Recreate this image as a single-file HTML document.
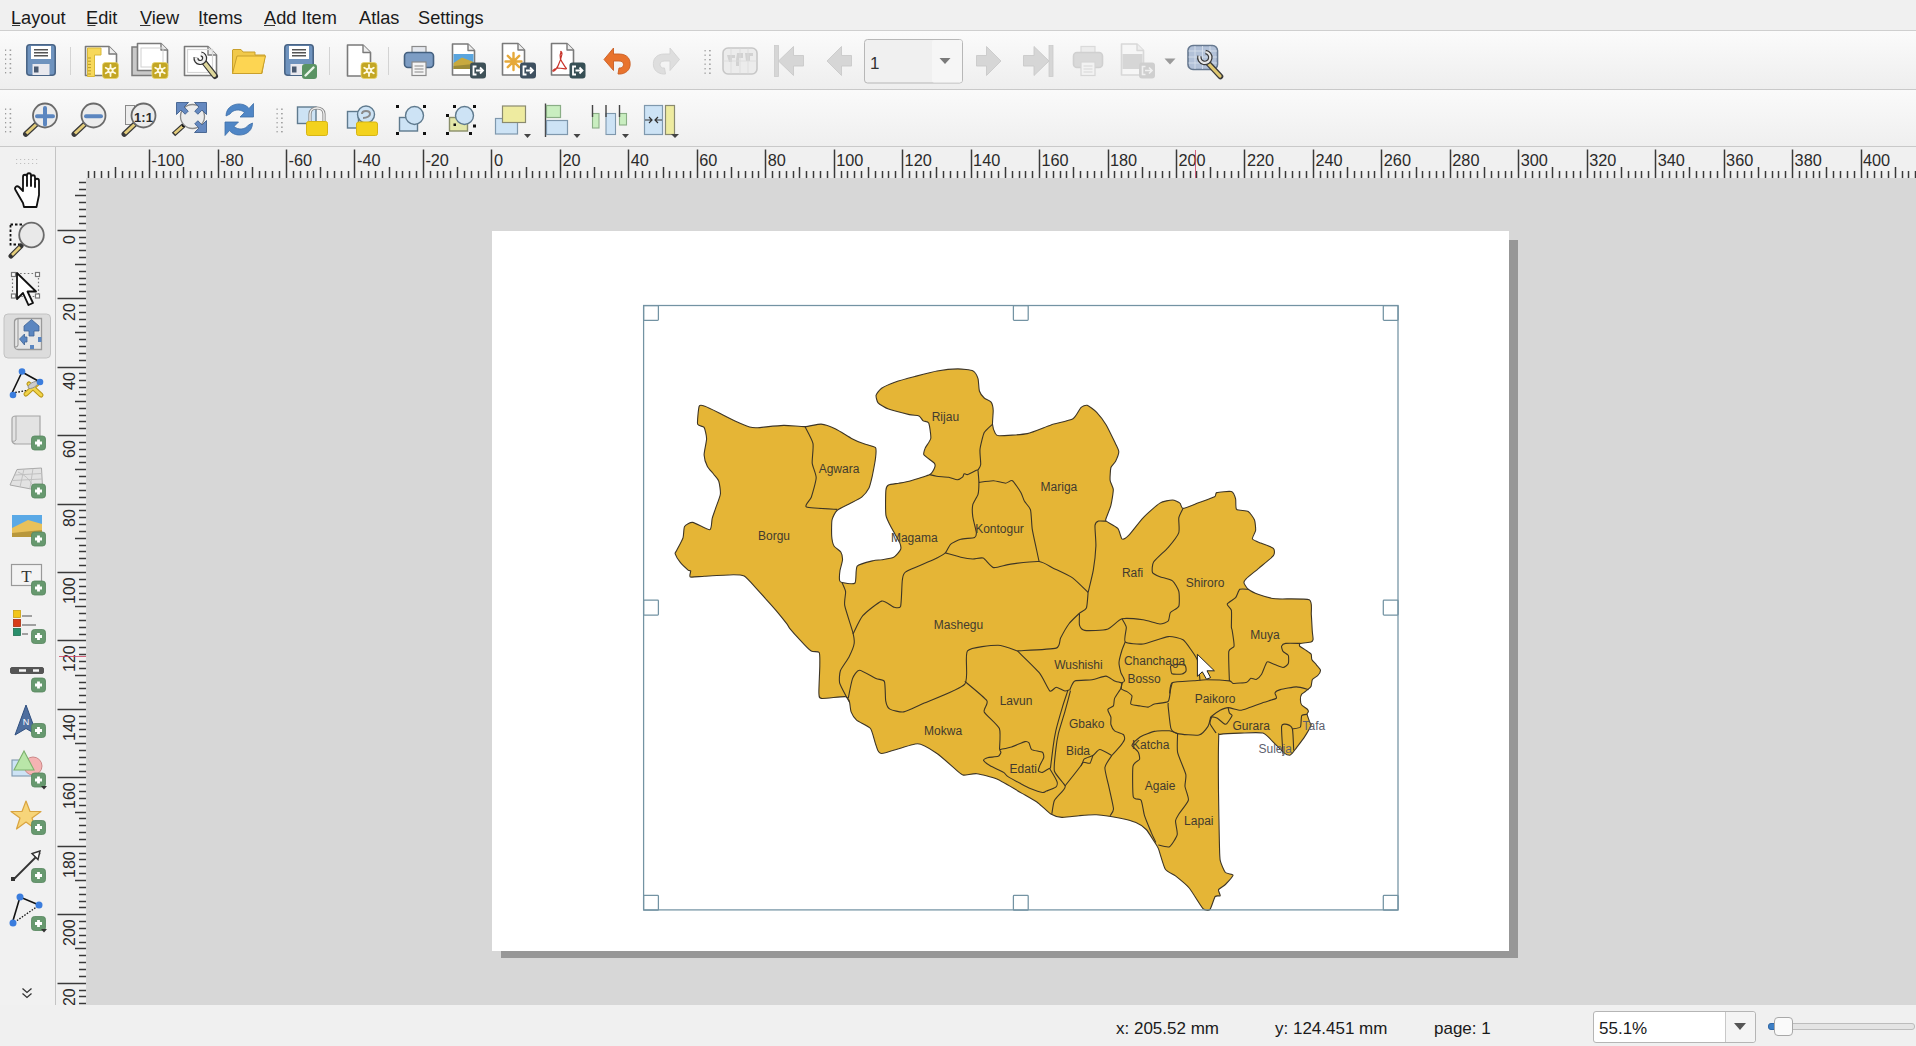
<!DOCTYPE html><html><head><meta charset="utf-8"><title>Layout</title><style>
*{margin:0;padding:0;box-sizing:border-box}
html,body{width:1916px;height:1046px;overflow:hidden;background:#f0f0f0;font-family:"Liberation Sans",sans-serif;color:#1b1b1b}
.a{position:absolute}
.mi{position:absolute;top:8px;font-size:18.2px;line-height:20px;color:#1a1a1a;white-space:nowrap}
.mi u{text-decoration:none;border-bottom:1px solid #1a1a1a}
.st{position:absolute;top:1019px;font-size:17px;line-height:20px;color:#1a1a1a;white-space:nowrap}
svg{position:absolute;overflow:visible}
</style></head><body>
<div class="a" style="left:0;top:0;width:1916px;height:31px;background:#f0f0f0;border-bottom:1px solid #cfcfcf"></div>
<div class="mi" style="left:11px">Layout</div>
<div class="mi" style="left:86px">Edit</div>
<div class="mi" style="left:140px">View</div>
<div class="mi" style="left:198px">Items</div>
<div class="mi" style="left:264px">Add Item</div>
<div class="mi" style="left:359px">Atlas</div>
<div class="mi" style="left:418px">Settings</div>
<svg style="left:0;top:0" width="600" height="40"><path d="M12 25.5H20M87.5 25.5H95.5M140 25.5H150.5M199.5 25.5H203.5M264 25.5H275" stroke="#333" stroke-width="1"/></svg>
<div class="a" style="left:0;top:31px;width:1916px;height:59px;background:linear-gradient(#fbfbfb,#eeeeee);border-bottom:1px solid #c9c9c9"></div>
<div class="a" style="left:0;top:90px;width:1916px;height:57px;background:linear-gradient(#fafafa,#efefef);border-bottom:1px solid #c9c9c9"></div>
<div class="a" style="left:0;top:147px;width:56px;height:858px;background:#f1f1f1;border-right:1px solid #c4c4c4"></div>
<div class="a" style="left:56px;top:147px;width:1860px;height:31px;background:#f0f0f0"></div>
<div class="a" style="left:56px;top:178px;width:30px;height:827px;background:#f0f0f0"></div>
<div class="a" style="left:86px;top:178px;width:1830px;height:827px;background:#d7d7d7"></div>
<div class="a" style="left:0;top:1005px;width:1916px;height:41px;background:#f0f0f0"></div>
<svg style="left:0;top:0" width="1916" height="1046"><path d="M88.5 171V178 M94.5 171V178 M101.5 171V178 M108.5 171V178 M115.5 167V178 M122.5 171V178 M129.5 171V178 M135.5 171V178 M142.5 171V178 M149.5 149.5V178 M156.5 171V178 M163.5 171V178 M170.5 171V178 M177.5 171V178 M183.5 167V178 M190.5 171V178 M197.5 171V178 M204.5 171V178 M211.5 171V178 M218.5 149.5V178 M224.5 171V178 M231.5 171V178 M238.5 171V178 M245.5 171V178 M252.5 167V178 M259.5 171V178 M265.5 171V178 M272.5 171V178 M279.5 171V178 M286.5 149.5V178 M293.5 171V178 M300.5 171V178 M307.5 171V178 M313.5 171V178 M320.5 167V178 M327.5 171V178 M334.5 171V178 M341.5 171V178 M348.5 171V178 M354.5 149.5V178 M361.5 171V178 M368.5 171V178 M375.5 171V178 M382.5 171V178 M389.5 167V178 M396.5 171V178 M402.5 171V178 M409.5 171V178 M416.5 171V178 M423.5 149.5V178 M430.5 171V178 M437.5 171V178 M443.5 171V178 M450.5 171V178 M457.5 167V178 M464.5 171V178 M471.5 171V178 M478.5 171V178 M485.5 171V178 M491.5 149.5V178 M498.5 171V178 M505.5 171V178 M512.5 171V178 M519.5 171V178 M526.5 167V178 M532.5 171V178 M539.5 171V178 M546.5 171V178 M553.5 171V178 M560.5 149.5V178 M567.5 171V178 M574.5 171V178 M580.5 171V178 M587.5 171V178 M594.5 167V178 M601.5 171V178 M608.5 171V178 M615.5 171V178 M621.5 171V178 M628.5 149.5V178 M635.5 171V178 M642.5 171V178 M649.5 171V178 M656.5 171V178 M663.5 167V178 M669.5 171V178 M676.5 171V178 M683.5 171V178 M690.5 171V178 M697.5 149.5V178 M704.5 171V178 M710.5 171V178 M717.5 171V178 M724.5 171V178 M731.5 167V178 M738.5 171V178 M745.5 171V178 M752.5 171V178 M758.5 171V178 M765.5 149.5V178 M772.5 171V178 M779.5 171V178 M786.5 171V178 M793.5 171V178 M799.5 167V178 M806.5 171V178 M813.5 171V178 M820.5 171V178 M827.5 171V178 M834.5 149.5V178 M841.5 171V178 M847.5 171V178 M854.5 171V178 M861.5 171V178 M868.5 167V178 M875.5 171V178 M882.5 171V178 M888.5 171V178 M895.5 171V178 M902.5 149.5V178 M909.5 171V178 M916.5 171V178 M923.5 171V178 M930.5 171V178 M936.5 167V178 M943.5 171V178 M950.5 171V178 M957.5 171V178 M964.5 171V178 M971.5 149.5V178 M977.5 171V178 M984.5 171V178 M991.5 171V178 M998.5 171V178 M1005.5 167V178 M1012.5 171V178 M1019.5 171V178 M1025.5 171V178 M1032.5 171V178 M1039.5 149.5V178 M1046.5 171V178 M1053.5 171V178 M1060.5 171V178 M1066.5 171V178 M1073.5 167V178 M1080.5 171V178 M1087.5 171V178 M1094.5 171V178 M1101.5 171V178 M1108.5 149.5V178 M1114.5 171V178 M1121.5 171V178 M1128.5 171V178 M1135.5 171V178 M1142.5 167V178 M1149.5 171V178 M1155.5 171V178 M1162.5 171V178 M1169.5 171V178 M1176.5 149.5V178 M1183.5 171V178 M1190.5 171V178 M1196.5 171V178 M1203.5 171V178 M1210.5 167V178 M1217.5 171V178 M1224.5 171V178 M1231.5 171V178 M1238.5 171V178 M1244.5 149.5V178 M1251.5 171V178 M1258.5 171V178 M1265.5 171V178 M1272.5 171V178 M1279.5 167V178 M1285.5 171V178 M1292.5 171V178 M1299.5 171V178 M1306.5 171V178 M1313.5 149.5V178 M1320.5 171V178 M1327.5 171V178 M1333.5 171V178 M1340.5 171V178 M1347.5 167V178 M1354.5 171V178 M1361.5 171V178 M1368.5 171V178 M1374.5 171V178 M1381.5 149.5V178 M1388.5 171V178 M1395.5 171V178 M1402.5 171V178 M1409.5 171V178 M1416.5 167V178 M1422.5 171V178 M1429.5 171V178 M1436.5 171V178 M1443.5 171V178 M1450.5 149.5V178 M1457.5 171V178 M1463.5 171V178 M1470.5 171V178 M1477.5 171V178 M1484.5 167V178 M1491.5 171V178 M1498.5 171V178 M1505.5 171V178 M1511.5 171V178 M1518.5 149.5V178 M1525.5 171V178 M1532.5 171V178 M1539.5 171V178 M1546.5 171V178 M1552.5 167V178 M1559.5 171V178 M1566.5 171V178 M1573.5 171V178 M1580.5 171V178 M1587.5 149.5V178 M1594.5 171V178 M1600.5 171V178 M1607.5 171V178 M1614.5 171V178 M1621.5 167V178 M1628.5 171V178 M1635.5 171V178 M1641.5 171V178 M1648.5 171V178 M1655.5 149.5V178 M1662.5 171V178 M1669.5 171V178 M1676.5 171V178 M1683.5 171V178 M1689.5 167V178 M1696.5 171V178 M1703.5 171V178 M1710.5 171V178 M1717.5 171V178 M1724.5 149.5V178 M1730.5 171V178 M1737.5 171V178 M1744.5 171V178 M1751.5 171V178 M1758.5 167V178 M1765.5 171V178 M1772.5 171V178 M1778.5 171V178 M1785.5 171V178 M1792.5 149.5V178 M1799.5 171V178 M1806.5 171V178 M1813.5 171V178 M1819.5 171V178 M1826.5 167V178 M1833.5 171V178 M1840.5 171V178 M1847.5 171V178 M1854.5 171V178 M1861.5 149.5V178 M1867.5 171V178 M1874.5 171V178 M1881.5 171V178 M1888.5 171V178 M1895.5 167V178 M1902.5 171V178 M1908.5 171V178 M1915.5 171V178" stroke="#3a3a3a" stroke-width="1.5" fill="none"/></svg>
<div class="a" style="left:151.6px;top:152.3px;font-size:16.3px;line-height:16px;color:#2a2a2a">-100</div><div class="a" style="left:220.1px;top:152.3px;font-size:16.3px;line-height:16px;color:#2a2a2a">-80</div><div class="a" style="left:288.5px;top:152.3px;font-size:16.3px;line-height:16px;color:#2a2a2a">-60</div><div class="a" style="left:357.0px;top:152.3px;font-size:16.3px;line-height:16px;color:#2a2a2a">-40</div><div class="a" style="left:425.4px;top:152.3px;font-size:16.3px;line-height:16px;color:#2a2a2a">-20</div><div class="a" style="left:493.9px;top:152.3px;font-size:16.3px;line-height:16px;color:#2a2a2a">0</div><div class="a" style="left:562.4px;top:152.3px;font-size:16.3px;line-height:16px;color:#2a2a2a">20</div><div class="a" style="left:630.8px;top:152.3px;font-size:16.3px;line-height:16px;color:#2a2a2a">40</div><div class="a" style="left:699.3px;top:152.3px;font-size:16.3px;line-height:16px;color:#2a2a2a">60</div><div class="a" style="left:767.7px;top:152.3px;font-size:16.3px;line-height:16px;color:#2a2a2a">80</div><div class="a" style="left:836.2px;top:152.3px;font-size:16.3px;line-height:16px;color:#2a2a2a">100</div><div class="a" style="left:904.6px;top:152.3px;font-size:16.3px;line-height:16px;color:#2a2a2a">120</div><div class="a" style="left:973.1px;top:152.3px;font-size:16.3px;line-height:16px;color:#2a2a2a">140</div><div class="a" style="left:1041.5px;top:152.3px;font-size:16.3px;line-height:16px;color:#2a2a2a">160</div><div class="a" style="left:1110.0px;top:152.3px;font-size:16.3px;line-height:16px;color:#2a2a2a">180</div><div class="a" style="left:1178.5px;top:152.3px;font-size:16.3px;line-height:16px;color:#2a2a2a">200</div><div class="a" style="left:1246.9px;top:152.3px;font-size:16.3px;line-height:16px;color:#2a2a2a">220</div><div class="a" style="left:1315.4px;top:152.3px;font-size:16.3px;line-height:16px;color:#2a2a2a">240</div><div class="a" style="left:1383.8px;top:152.3px;font-size:16.3px;line-height:16px;color:#2a2a2a">260</div><div class="a" style="left:1452.3px;top:152.3px;font-size:16.3px;line-height:16px;color:#2a2a2a">280</div><div class="a" style="left:1520.7px;top:152.3px;font-size:16.3px;line-height:16px;color:#2a2a2a">300</div><div class="a" style="left:1589.2px;top:152.3px;font-size:16.3px;line-height:16px;color:#2a2a2a">320</div><div class="a" style="left:1657.7px;top:152.3px;font-size:16.3px;line-height:16px;color:#2a2a2a">340</div><div class="a" style="left:1726.1px;top:152.3px;font-size:16.3px;line-height:16px;color:#2a2a2a">360</div><div class="a" style="left:1794.6px;top:152.3px;font-size:16.3px;line-height:16px;color:#2a2a2a">380</div><div class="a" style="left:1863.0px;top:152.3px;font-size:16.3px;line-height:16px;color:#2a2a2a">400</div>
<svg style="left:0;top:0" width="1916" height="1046"><path d="M79 182.5H86 M79 189.5H86 M75 195.5H86 M79 202.5H86 M79 209.5H86 M79 216.5H86 M79 223.5H86 M57.5 230.5H86 M79 237.5H86 M79 243.5H86 M79 250.5H86 M79 257.5H86 M75 264.5H86 M79 271.5H86 M79 278.5H86 M79 284.5H86 M79 291.5H86 M57.5 298.5H86 M79 305.5H86 M79 312.5H86 M79 319.5H86 M79 326.5H86 M75 332.5H86 M79 339.5H86 M79 346.5H86 M79 353.5H86 M79 360.5H86 M57.5 367.5H86 M79 373.5H86 M79 380.5H86 M79 387.5H86 M79 394.5H86 M75 401.5H86 M79 408.5H86 M79 415.5H86 M79 421.5H86 M79 428.5H86 M57.5 435.5H86 M79 442.5H86 M79 449.5H86 M79 456.5H86 M79 462.5H86 M75 469.5H86 M79 476.5H86 M79 483.5H86 M79 490.5H86 M79 497.5H86 M57.5 504.5H86 M79 510.5H86 M79 517.5H86 M79 524.5H86 M79 531.5H86 M75 538.5H86 M79 545.5H86 M79 551.5H86 M79 558.5H86 M79 565.5H86 M57.5 572.5H86 M79 579.5H86 M79 586.5H86 M79 593.5H86 M79 599.5H86 M75 606.5H86 M79 613.5H86 M79 620.5H86 M79 627.5H86 M79 634.5H86 M57.5 640.5H86 M79 647.5H86 M79 654.5H86 M79 661.5H86 M79 668.5H86 M75 675.5H86 M79 682.5H86 M79 688.5H86 M79 695.5H86 M79 702.5H86 M57.5 709.5H86 M79 716.5H86 M79 723.5H86 M79 729.5H86 M79 736.5H86 M75 743.5H86 M79 750.5H86 M79 757.5H86 M79 764.5H86 M79 771.5H86 M57.5 777.5H86 M79 784.5H86 M79 791.5H86 M79 798.5H86 M79 805.5H86 M75 812.5H86 M79 818.5H86 M79 825.5H86 M79 832.5H86 M79 839.5H86 M57.5 846.5H86 M79 853.5H86 M79 859.5H86 M79 866.5H86 M79 873.5H86 M75 880.5H86 M79 887.5H86 M79 894.5H86 M79 901.5H86 M79 907.5H86 M57.5 914.5H86 M79 921.5H86 M79 928.5H86 M79 935.5H86 M79 942.5H86 M75 948.5H86 M79 955.5H86 M79 962.5H86 M79 969.5H86 M79 976.5H86 M57.5 983.5H86 M79 990.5H86 M79 996.5H86 M79 1003.5H86" stroke="#3a3a3a" stroke-width="1.5" fill="none"/></svg>
<div class="a" style="left:56px;top:178px;width:30px;height:827px;overflow:hidden"><div class="a" style="left:5.5px;top:56.7px;width:16px;height:40px;"><div style="position:absolute;left:0;top:0;transform-origin:0 0;transform:translate(0px,9px) rotate(-90deg);font-size:16px;line-height:16px;color:#2a2a2a;white-space:nowrap">0</div></div><div class="a" style="left:5.5px;top:125.2px;width:16px;height:40px;"><div style="position:absolute;left:0;top:0;transform-origin:0 0;transform:translate(0px,18px) rotate(-90deg);font-size:16px;line-height:16px;color:#2a2a2a;white-space:nowrap">20</div></div><div class="a" style="left:5.5px;top:193.6px;width:16px;height:40px;"><div style="position:absolute;left:0;top:0;transform-origin:0 0;transform:translate(0px,18px) rotate(-90deg);font-size:16px;line-height:16px;color:#2a2a2a;white-space:nowrap">40</div></div><div class="a" style="left:5.5px;top:262.1px;width:16px;height:40px;"><div style="position:absolute;left:0;top:0;transform-origin:0 0;transform:translate(0px,18px) rotate(-90deg);font-size:16px;line-height:16px;color:#2a2a2a;white-space:nowrap">60</div></div><div class="a" style="left:5.5px;top:330.5px;width:16px;height:40px;"><div style="position:absolute;left:0;top:0;transform-origin:0 0;transform:translate(0px,18px) rotate(-90deg);font-size:16px;line-height:16px;color:#2a2a2a;white-space:nowrap">80</div></div><div class="a" style="left:5.5px;top:399.0px;width:16px;height:40px;"><div style="position:absolute;left:0;top:0;transform-origin:0 0;transform:translate(0px,27px) rotate(-90deg);font-size:16px;line-height:16px;color:#2a2a2a;white-space:nowrap">100</div></div><div class="a" style="left:5.5px;top:467.4px;width:16px;height:40px;"><div style="position:absolute;left:0;top:0;transform-origin:0 0;transform:translate(0px,27px) rotate(-90deg);font-size:16px;line-height:16px;color:#2a2a2a;white-space:nowrap">120</div></div><div class="a" style="left:5.5px;top:535.9px;width:16px;height:40px;"><div style="position:absolute;left:0;top:0;transform-origin:0 0;transform:translate(0px,27px) rotate(-90deg);font-size:16px;line-height:16px;color:#2a2a2a;white-space:nowrap">140</div></div><div class="a" style="left:5.5px;top:604.3px;width:16px;height:40px;"><div style="position:absolute;left:0;top:0;transform-origin:0 0;transform:translate(0px,27px) rotate(-90deg);font-size:16px;line-height:16px;color:#2a2a2a;white-space:nowrap">160</div></div><div class="a" style="left:5.5px;top:672.8px;width:16px;height:40px;"><div style="position:absolute;left:0;top:0;transform-origin:0 0;transform:translate(0px,27px) rotate(-90deg);font-size:16px;line-height:16px;color:#2a2a2a;white-space:nowrap">180</div></div><div class="a" style="left:5.5px;top:741.3px;width:16px;height:40px;"><div style="position:absolute;left:0;top:0;transform-origin:0 0;transform:translate(0px,27px) rotate(-90deg);font-size:16px;line-height:16px;color:#2a2a2a;white-space:nowrap">200</div></div><div class="a" style="left:5.5px;top:809.7px;width:16px;height:40px;"><div style="position:absolute;left:0;top:0;transform-origin:0 0;transform:translate(0px,27px) rotate(-90deg);font-size:16px;line-height:16px;color:#2a2a2a;white-space:nowrap">220</div></div></div>
<div class="a" style="left:501px;top:240px;width:1017px;height:718px;background:#979797"></div>
<div class="a" style="left:492px;top:231px;width:1017px;height:720px;background:#fff"></div>
<svg style="left:0;top:0" width="1916" height="1046">
<path d="M699.2,406.2 C699.9,404.4 702.9,405.6 704.9,406.2 C706.9,406.8 715.7,411.2 718.7,412.7 C721.7,414.2 731.9,419.5 735.0,420.9 C738.1,422.3 747.3,426.3 749.6,427.0 C751.9,427.7 754.3,427.9 757.7,427.7 C761.1,427.5 779.0,425.5 783.7,425.4 C788.4,425.3 801.2,426.7 804.9,426.6 C808.6,426.5 818.0,423.9 821.1,424.1 C824.2,424.3 832.6,427.5 835.7,429.0 C838.8,430.5 849.2,437.2 852.0,438.7 C854.8,440.2 860.9,442.7 863.3,443.6 C865.6,444.5 874.3,446.2 875.5,447.7 C876.7,449.2 875.8,455.4 875.5,458.2 C875.2,461.0 872.9,473.0 872.3,476.0 C871.6,479.0 870.1,485.9 869.0,488.0 C867.9,490.1 863.6,495.6 861.7,497.2 C859.8,498.8 852.5,502.2 850.0,503.5 C847.5,504.8 838.8,508.9 837.0,510.5 C835.2,512.1 832.5,517.4 832.0,520.0 C831.5,522.6 831.5,533.6 831.7,536.2 C831.9,538.8 833.1,544.4 834.0,546.0 C834.9,547.6 839.9,550.6 840.8,552.0 C841.6,553.4 842.6,558.1 842.5,560.0 C842.4,561.9 840.3,568.5 840.0,570.5 C839.7,572.5 839.4,579.3 839.6,580.5 C839.8,581.7 840.5,582.2 842.0,582.5 C843.5,582.8 853.5,584.6 855.0,583.0 C856.5,581.4 855.4,568.4 857.2,566.2 C859.0,564.0 870.7,561.3 873.1,560.7 C875.5,560.1 879.5,560.1 881.6,559.8 C883.7,559.4 891.8,558.2 893.7,557.2 C895.6,556.2 900.0,551.0 900.6,549.5 C901.2,548.0 900.6,544.7 899.7,542.6 C898.8,540.5 893.4,531.5 892.0,528.8 C890.6,526.0 886.5,519.0 885.9,515.1 C885.3,511.2 885.6,493.1 885.9,490.1 C886.2,487.1 887.2,485.7 888.5,485.0 C889.8,484.3 896.6,483.6 898.8,483.2 C901.0,482.8 907.8,481.6 910.9,480.7 C914.0,479.8 927.4,475.9 929.8,474.6 C932.2,473.3 934.0,469.1 934.5,468.0 C935.0,466.9 935.4,464.5 934.3,463.2 C933.2,461.9 924.8,456.3 923.9,454.8 C923.0,453.3 924.6,449.6 925.3,447.9 C926.0,446.2 930.5,440.7 930.8,438.2 C931.1,435.7 929.5,424.7 928.7,423.0 C927.9,421.3 924.2,421.6 923.2,420.9 C922.2,420.2 920.4,416.6 919.0,416.0 C917.6,415.4 912.3,415.3 909.3,414.6 C906.2,413.9 891.6,410.3 888.5,409.1 C885.4,407.9 879.3,404.2 878.1,402.8 C876.9,401.4 875.8,396.6 876.1,395.2 C876.5,393.8 879.7,389.6 881.6,388.3 C883.5,387.0 892.2,383.2 895.5,382.0 C898.8,380.8 910.7,377.6 914.9,376.5 C919.1,375.4 932.8,371.8 937.1,371.0 C941.4,370.2 954.3,368.9 957.9,368.9 C961.5,368.9 971.1,369.9 973.1,370.9 C975.1,371.9 977.4,376.6 978.0,378.6 C978.6,380.6 978.8,389.1 979.4,391.0 C980.0,392.9 983.0,396.9 984.2,398.0 C985.4,399.1 990.2,400.9 991.1,402.1 C992.0,403.4 993.1,408.3 993.2,410.5 C993.3,412.7 992.3,422.1 992.5,424.3 C992.7,426.5 994.4,431.7 995.0,432.8 C995.6,433.9 995.7,435.6 998.9,435.7 C1002.1,435.8 1022.1,434.7 1027.3,433.6 C1032.5,432.5 1046.4,426.5 1051.0,425.0 C1055.6,423.5 1070.0,420.4 1073.0,418.7 C1076.0,417.0 1079.5,408.9 1080.9,407.6 C1082.3,406.3 1085.6,404.8 1087.2,405.3 C1088.8,405.8 1094.8,410.3 1096.7,412.3 C1098.6,414.3 1104.3,421.8 1106.2,425.0 C1108.1,428.2 1114.3,441.2 1115.6,443.9 C1116.9,446.6 1118.8,450.1 1118.8,451.8 C1118.8,453.5 1116.4,459.6 1115.6,461.2 C1114.8,462.8 1111.5,465.6 1110.9,467.5 C1110.4,469.4 1109.9,478.0 1110.1,480.2 C1110.3,482.4 1113.2,487.1 1113.3,489.6 C1113.4,492.1 1111.6,502.6 1110.9,505.4 C1110.2,508.2 1106.7,516.4 1106.2,518.0 C1105.7,519.6 1105.0,520.2 1106.2,521.2 C1107.4,522.2 1116.2,526.6 1117.8,528.4 C1119.4,530.2 1120.9,538.2 1122.0,538.9 C1123.1,539.6 1126.3,537.8 1128.4,535.7 C1130.5,533.6 1139.9,521.1 1143.1,517.8 C1146.2,514.5 1157.0,504.9 1159.9,503.1 C1162.8,501.3 1170.5,500.0 1172.5,500.0 C1174.5,500.0 1178.9,502.3 1179.9,503.1 C1181.0,503.9 1181.2,508.4 1183.0,508.4 C1184.8,508.4 1194.5,504.3 1197.7,503.1 C1200.9,501.9 1212.7,497.9 1214.6,496.8 C1216.5,495.8 1215.0,493.1 1216.7,492.6 C1218.4,492.1 1229.5,491.0 1231.4,491.6 C1233.3,492.2 1235.1,497.1 1235.6,498.9 C1236.1,500.7 1235.3,508.1 1236.6,509.4 C1237.9,510.7 1246.4,510.4 1248.2,511.5 C1250.0,512.6 1253.8,518.1 1254.5,520.0 C1255.2,521.9 1255.8,528.6 1255.6,530.5 C1255.4,532.4 1251.9,537.6 1252.4,538.9 C1252.9,540.2 1258.7,542.2 1260.8,543.1 C1262.9,544.0 1272.1,547.0 1273.4,548.3 C1274.7,549.6 1274.9,553.7 1273.4,555.7 C1271.9,557.7 1261.4,566.0 1258.7,568.3 C1256.0,570.6 1247.6,577.3 1246.1,578.8 C1244.6,580.3 1243.8,582.0 1244.0,583.0 C1244.2,584.0 1246.7,588.1 1248.2,589.3 C1249.7,590.5 1256.0,593.6 1258.7,594.6 C1261.4,595.6 1270.5,598.3 1275.5,598.8 C1280.5,599.3 1305.6,598.2 1309.2,599.8 C1312.8,601.4 1311.0,611.4 1311.3,614.6 C1311.6,617.8 1312.1,628.9 1312.3,631.4 C1312.5,633.9 1313.2,638.3 1313.1,639.4 C1313.0,640.5 1312.4,641.6 1311.1,642.0 C1309.8,642.4 1301.5,643.0 1300.4,643.4 C1299.3,643.8 1299.2,645.4 1299.7,646.1 C1300.2,646.8 1304.6,649.3 1305.7,650.1 C1306.8,650.9 1310.5,653.2 1311.1,654.1 C1311.7,655.0 1311.3,658.3 1311.8,659.4 C1312.3,660.5 1315.5,663.7 1316.4,664.8 C1317.3,665.9 1320.4,669.1 1320.5,670.2 C1320.6,671.3 1318.6,674.6 1317.8,675.5 C1317.0,676.4 1313.1,678.4 1312.4,679.5 C1311.7,680.6 1311.6,685.1 1311.1,686.2 C1310.6,687.3 1308.0,689.4 1307.1,690.2 C1306.2,691.0 1302.4,693.3 1301.7,694.2 C1301.0,695.1 1300.4,698.5 1300.4,699.6 C1300.4,700.7 1301.0,704.1 1301.7,705.0 C1302.4,705.9 1306.4,708.3 1307.1,709.0 C1307.8,709.7 1308.4,711.1 1308.4,711.6 C1308.4,712.1 1307.0,713.2 1307.1,714.3 C1307.2,715.4 1309.4,721.3 1309.8,722.4 C1310.2,723.5 1311.6,723.5 1311.1,725.0 C1310.6,726.5 1305.9,734.8 1304.4,737.1 C1302.9,739.4 1297.6,746.2 1296.4,747.8 C1295.2,749.4 1293.1,752.4 1292.4,753.1 C1291.7,753.8 1290.5,755.2 1289.7,755.2 C1288.9,755.2 1285.8,754.2 1284.3,753.1 C1282.8,752.0 1277.1,745.8 1275.0,743.8 C1272.9,741.8 1266.4,734.2 1262.9,733.1 C1259.4,732.0 1244.5,733.0 1240.2,733.1 C1235.9,733.2 1222.2,734.0 1220.1,734.4 C1217.9,734.8 1218.9,731.4 1218.7,737.1 C1218.5,742.8 1218.4,781.0 1218.5,791.6 C1218.6,802.2 1219.2,836.3 1219.4,843.2 C1219.6,850.1 1219.6,857.5 1220.2,860.4 C1220.8,863.3 1224.1,871.0 1225.4,872.5 C1226.7,874.0 1233.1,873.9 1233.1,875.1 C1233.1,876.3 1226.9,883.0 1225.4,884.5 C1223.9,886.0 1219.0,888.6 1218.5,889.7 C1218.0,890.8 1220.5,895.0 1220.2,895.7 C1219.9,896.4 1216.1,895.2 1215.1,896.6 C1214.1,898.0 1211.1,908.3 1209.9,909.5 C1208.7,910.7 1205.1,910.8 1203.0,908.6 C1200.9,906.5 1192.0,891.3 1189.2,888.0 C1186.5,884.7 1177.9,877.8 1175.5,875.9 C1173.1,874.0 1166.9,871.8 1165.2,869.0 C1163.5,866.2 1159.5,851.3 1158.3,848.4 C1157.1,845.5 1154.3,841.7 1153.1,839.8 C1151.9,837.9 1147.9,831.2 1146.2,829.5 C1144.5,827.8 1138.5,823.7 1135.9,822.6 C1133.3,821.5 1124.4,819.1 1120.4,818.3 C1116.4,817.5 1100.4,815.1 1096.3,814.8 C1092.2,814.5 1082.5,815.4 1079.1,815.7 C1075.7,816.0 1064.7,817.6 1061.9,817.4 C1059.1,817.2 1053.1,815.4 1050.8,814.0 C1048.5,812.6 1041.0,805.1 1038.4,803.2 C1035.8,801.3 1029.2,797.5 1025.0,795.1 C1020.9,792.7 1001.7,781.2 996.9,779.1 C992.1,777.0 980.1,774.1 976.8,773.7 C973.4,773.3 965.4,775.5 963.4,775.1 C961.4,774.7 959.0,772.3 956.4,770.1 C953.8,767.9 940.9,756.1 937.0,753.5 C933.1,750.9 923.1,743.8 917.6,743.8 C912.1,743.8 885.8,753.4 881.6,753.5 C877.4,753.6 877.1,747.7 876.0,745.2 C874.9,742.7 872.4,731.0 870.5,728.5 C868.6,726.0 858.5,721.9 856.6,720.2 C854.7,718.5 851.8,713.7 851.1,711.9 C850.4,710.1 850.0,703.5 849.5,702.0 C849.0,700.5 848.4,697.1 845.6,696.7 C842.8,696.3 824.2,698.8 821.5,698.4 C818.8,698.0 819.1,696.5 818.9,693.2 C818.7,689.9 819.8,669.8 819.8,665.7 C819.8,661.6 820.1,654.0 819.2,652.5 C818.3,651.0 813.1,652.2 811.2,651.0 C809.3,649.8 802.5,642.6 800.4,640.3 C798.2,638.0 791.0,629.9 789.7,628.3 C788.4,626.7 788.4,625.9 787.1,624.2 C785.8,622.5 778.5,613.4 776.4,610.9 C774.3,608.4 767.9,601.2 765.7,598.8 C763.6,596.4 757.0,589.1 754.9,586.8 C752.8,584.5 746.3,577.3 744.2,576.1 C742.1,574.9 737.5,574.7 733.5,574.7 C729.5,574.7 708.7,576.0 704.4,576.2 C700.1,576.4 691.7,577.5 690.3,577.0 C688.9,576.5 690.9,571.7 690.7,571.0 C690.5,570.3 689.1,571.0 688.1,570.1 C687.1,569.2 681.6,564.0 680.3,562.4 C679.0,560.8 675.6,555.0 675.2,553.8 C674.8,552.6 675.7,552.4 676.5,550.8 C677.3,549.2 682.2,540.2 683.0,537.8 C683.8,535.4 683.6,528.0 684.6,526.5 C685.6,525.0 690.2,522.1 692.7,522.4 C695.2,522.7 707.8,530.1 709.8,529.7 C711.8,529.3 711.6,520.4 712.2,518.3 C712.8,516.2 714.7,511.0 715.5,508.6 C716.3,506.2 720.1,496.8 720.4,494.0 C720.7,491.2 719.4,482.9 718.7,481.0 C718.1,479.1 715.0,476.0 713.9,474.5 C712.8,473.0 708.4,468.3 707.4,466.4 C706.4,464.4 704.2,457.8 704.1,455.0 C704.0,452.2 706.6,441.5 706.6,438.7 C706.6,435.9 705.0,428.9 704.1,427.4 C703.2,425.9 698.1,426.2 697.6,424.1 C697.1,422.0 698.5,408.0 699.2,406.2 Z" fill="#e5b536" stroke="#3d3526" stroke-width="1.1" stroke-linejoin="round"/>
<path d="M804.9,426.6 C805.7,428.3 812.3,440.0 813.0,443.6 C813.7,447.2 811.9,459.7 812.2,463.1 C812.5,466.5 816.3,474.3 816.2,477.7 C816.1,481.1 812.3,494.3 811.3,497.2 C810.3,500.1 803.9,505.8 806.5,507.0 C809.1,508.2 834.2,509.2 837.3,509.4" fill="none" stroke="#3d3526" stroke-width="1.1" stroke-linejoin="round"/>
<path d="M842.0,582.5 C842.4,583.4 845.3,589.3 845.6,591.6 C845.9,593.9 844.0,601.4 844.7,605.4 C845.4,609.4 851.5,627.4 852.5,631.2 C853.5,635.0 854.6,640.7 854.2,643.3 C853.9,645.9 850.4,654.2 849.0,657.0 C847.6,659.8 841.3,668.2 840.4,670.8 C839.5,673.4 839.0,680.3 839.6,682.9 C840.2,685.5 845.4,694.8 846.4,696.7 C847.4,698.6 849.2,701.5 849.5,702.0" fill="none" stroke="#3d3526" stroke-width="1.1" stroke-linejoin="round"/>
<path d="M853.0,634.0 C854.0,632.2 859.9,619.0 862.8,615.7 C865.7,612.4 878.5,602.0 881.6,601.1 C884.7,600.2 891.8,606.6 893.7,607.1 C895.6,607.6 899.7,609.0 900.6,606.3 C901.5,603.6 901.8,583.9 902.3,580.5 C902.8,577.1 902.6,574.0 905.7,571.9 C908.8,569.8 929.3,561.7 933.3,559.8 C937.3,557.9 943.6,554.4 945.3,552.9 C947.0,551.4 949.0,545.7 950.5,544.3 C952.0,542.9 958.4,539.9 960.8,539.2 C963.2,538.5 973.1,538.1 974.6,537.4 C976.1,536.7 976.5,534.4 976.3,532.3 C976.1,530.2 973.1,519.6 972.8,516.8 C972.4,514.0 972.3,506.9 972.8,504.7 C973.3,502.5 977.4,496.6 978.0,494.4 C978.6,492.2 978.9,484.8 978.9,482.4 C978.9,480.0 978.1,471.5 978.0,470.3" fill="none" stroke="#3d3526" stroke-width="1.1" stroke-linejoin="round"/>
<path d="M929.8,474.6 C930.5,474.8 934.8,476.0 936.7,476.3 C938.6,476.6 946.6,476.8 948.7,477.2 C950.8,477.6 955.9,479.8 957.3,479.8 C958.7,479.8 961.8,477.8 962.5,477.2 C963.2,476.6 963.7,474.1 964.2,473.8 C964.7,473.5 966.5,475.0 967.7,474.6 C968.9,474.2 975.3,470.8 976.3,470.3 C977.3,469.9 977.8,470.1 978.0,470.1" fill="none" stroke="#3d3526" stroke-width="1.1" stroke-linejoin="round"/>
<path d="M992.5,424.3 C991.7,425.1 985.5,430.1 984.2,432.6 C983.0,435.1 980.4,446.1 980.0,449.3 C979.6,452.5 980.9,462.4 980.7,464.5 C980.5,466.6 978.3,469.5 978.0,470.1" fill="none" stroke="#3d3526" stroke-width="1.1" stroke-linejoin="round"/>
<path d="M978.9,482.4 C980.4,482.2 990.8,480.6 993.5,480.7 C996.2,480.8 1003.6,483.2 1005.5,483.2 C1007.4,483.2 1010.9,479.8 1012.4,480.7 C1013.9,481.6 1019.8,490.6 1021.0,492.7 C1022.2,494.8 1023.5,499.6 1024.5,501.3 C1025.5,503.0 1029.7,507.1 1030.5,509.9 C1031.3,512.6 1031.6,524.8 1032.2,528.8 C1032.8,532.8 1035.8,546.2 1036.5,549.5 C1037.2,552.8 1038.8,560.3 1039.1,561.5" fill="none" stroke="#3d3526" stroke-width="1.1" stroke-linejoin="round"/>
<path d="M945.3,552.9 C946.8,553.3 958.0,556.6 960.8,557.2 C963.5,557.8 970.6,558.9 972.8,559.0 C975.0,559.1 981.1,557.2 983.2,558.1 C985.3,559.0 990.8,567.0 993.5,567.6 C996.2,568.2 1006.1,564.7 1010.7,564.1 C1015.3,563.5 1034.8,561.1 1039.1,561.5 C1043.4,561.9 1050.4,566.8 1053.7,568.4 C1057.0,570.0 1069.2,575.5 1072.6,577.9 C1076.0,580.3 1086.5,591.0 1088.1,592.5" fill="none" stroke="#3d3526" stroke-width="1.1" stroke-linejoin="round"/>
<path d="M1088.1,592.5 C1088.6,590.3 1092.5,574.8 1093.3,570.1 C1094.1,565.5 1095.7,550.5 1095.9,546.0 C1096.1,541.5 1094.7,527.9 1095.0,525.4 C1095.3,522.9 1097.4,521.5 1098.5,521.1 C1099.6,520.7 1105.4,521.2 1106.2,521.2" fill="none" stroke="#3d3526" stroke-width="1.1" stroke-linejoin="round"/>
<path d="M1088.1,592.5 C1087.9,594.0 1087.3,605.9 1086.4,608.0 C1085.5,610.1 1081.2,611.7 1079.5,613.2 C1077.8,614.8 1071.1,621.0 1069.2,623.5 C1067.3,626.0 1061.9,635.5 1060.6,638.0 C1059.3,640.5 1060.5,646.8 1056.2,648.1 C1051.9,649.4 1021.3,650.6 1017.4,650.9" fill="none" stroke="#3d3526" stroke-width="1.1" stroke-linejoin="round"/>
<path d="M1079.5,613.2 C1079.5,614.4 1079.0,623.5 1079.5,625.2 C1080.0,626.9 1081.9,630.0 1084.7,630.4 C1087.5,630.8 1103.6,630.5 1107.3,629.3 C1111.0,628.1 1118.4,619.8 1122.0,618.8 C1125.6,617.8 1139.3,619.3 1143.1,619.8 C1146.9,620.3 1157.4,623.9 1159.9,624.0 C1162.4,624.1 1167.2,622.0 1168.3,620.9 C1169.3,619.8 1169.4,614.0 1170.4,612.5 C1171.5,611.0 1178.0,608.3 1178.8,606.2 C1179.6,604.1 1179.4,593.9 1178.8,591.4 C1178.2,588.9 1174.4,582.4 1172.5,580.9 C1170.6,579.4 1161.9,577.5 1159.9,576.7 C1157.9,575.9 1153.1,574.0 1152.5,572.5 C1151.9,571.0 1152.0,564.5 1153.6,562.0 C1155.2,559.5 1165.8,550.2 1168.3,547.3 C1170.8,544.4 1177.8,535.6 1178.8,532.6 C1179.8,529.6 1178.4,520.2 1178.8,517.8 C1179.2,515.4 1182.6,509.3 1183.0,508.4" fill="none" stroke="#3d3526" stroke-width="1.1" stroke-linejoin="round"/>
<path d="M1122.0,618.8 C1122.4,619.6 1126.0,624.9 1126.3,627.2 C1126.6,629.5 1123.5,640.2 1125.2,641.9 C1126.9,643.6 1138.8,644.5 1143.1,644.0 C1147.4,643.5 1164.3,637.0 1168.3,636.6 C1172.3,636.2 1180.7,638.4 1183.0,639.8 C1185.3,641.2 1189.9,648.2 1191.4,650.3 C1192.9,652.4 1196.8,657.8 1197.7,660.8 C1198.6,663.8 1199.8,678.5 1200.0,680.5" fill="none" stroke="#3d3526" stroke-width="1.1" stroke-linejoin="round"/>
<path d="M1248.2,589.3 C1247.4,589.3 1241.1,588.5 1239.8,589.3 C1238.5,590.1 1236.9,596.2 1235.6,597.7 C1234.3,599.2 1227.6,602.8 1227.2,604.1 C1226.8,605.4 1231.0,608.1 1231.4,610.4 C1231.8,612.7 1231.3,625.2 1231.4,627.2 C1231.5,629.2 1231.8,628.1 1232.1,630.0 C1232.4,631.9 1234.4,644.0 1234.1,646.1 C1233.8,648.2 1229.3,647.9 1228.8,651.4 C1228.3,654.9 1229.3,677.9 1229.4,680.9" fill="none" stroke="#3d3526" stroke-width="1.1" stroke-linejoin="round"/>
<path d="M1169.6,693.5 C1169.9,692.4 1169.8,684.1 1172.2,682.8 C1174.6,681.5 1190.1,681.1 1193.5,680.8 C1196.9,680.5 1202.6,679.7 1206.2,679.7 C1209.8,679.7 1226.7,680.5 1229.4,680.9 C1232.1,681.3 1231.8,683.4 1233.5,683.5 C1235.2,683.6 1245.1,682.7 1246.8,682.2 C1248.5,681.7 1250.0,678.5 1250.9,678.2 C1251.8,677.9 1255.1,679.9 1256.2,679.5 C1257.3,679.1 1260.5,675.9 1261.6,674.2 C1262.7,672.5 1265.8,663.2 1266.9,662.1 C1268.0,661.0 1270.7,663.0 1272.3,663.5 C1273.9,664.0 1281.4,667.5 1283.0,667.5 C1284.6,667.5 1287.8,664.7 1288.3,663.5 C1288.8,662.3 1288.8,656.6 1288.3,655.4 C1287.8,654.2 1283.7,652.3 1283.0,651.4 C1282.3,650.5 1281.3,646.9 1281.6,646.1 C1281.9,645.3 1283.8,643.7 1285.7,643.4 C1287.6,643.1 1298.9,643.4 1300.4,643.4" fill="none" stroke="#3d3526" stroke-width="1.1" stroke-linejoin="round"/>
<path d="M1125.2,641.9 C1124.9,642.7 1122.6,648.0 1122.0,650.0 C1121.4,652.0 1119.1,660.2 1119.0,662.4 C1118.9,664.6 1120.4,670.8 1120.8,672.3 C1121.2,673.8 1122.9,676.4 1123.3,677.3 C1123.7,678.2 1124.6,680.4 1124.5,681.0 C1124.4,681.6 1122.2,682.7 1122.0,682.9" fill="none" stroke="#3d3526" stroke-width="1.1" stroke-linejoin="round"/>
<path d="M1069.8,689.7 C1070.3,688.8 1072.6,682.0 1074.8,681.0 C1077.0,680.0 1089.1,680.3 1092.2,679.8 C1095.3,679.3 1103.7,676.0 1105.9,676.1 C1108.1,676.2 1113.0,680.3 1114.6,681.0 C1116.2,681.7 1121.3,682.7 1122.0,682.9" fill="none" stroke="#3d3526" stroke-width="1.1" stroke-linejoin="round"/>
<path d="M1017.4,650.9 C1019.6,653.1 1036.3,669.1 1039.6,673.1 C1042.8,677.1 1048.2,689.6 1049.9,691.0 C1051.6,692.4 1054.7,687.2 1056.2,687.2 C1057.7,687.2 1063.5,690.8 1064.9,691.0 C1066.3,691.2 1069.3,689.8 1069.8,689.7" fill="none" stroke="#3d3526" stroke-width="1.1" stroke-linejoin="round"/>
<path d="M1122.0,682.9 C1121.9,683.5 1120.9,688.2 1121.4,689.1 C1121.9,690.0 1125.9,690.9 1127.0,691.6 C1128.1,692.3 1131.6,694.8 1132.0,696.0 C1132.4,697.2 1130.0,703.0 1130.8,704.0 C1131.5,705.0 1137.8,705.6 1139.5,705.9 C1141.2,706.2 1146.7,707.3 1148.2,707.1 C1149.7,706.9 1152.4,704.6 1154.4,704.0 C1156.4,703.4 1166.5,702.9 1168.1,701.5 C1169.7,700.1 1170.1,691.6 1170.5,689.7 C1170.9,687.8 1172.0,683.5 1172.2,682.8" fill="none" stroke="#3d3526" stroke-width="1.1" stroke-linejoin="round"/>
<path d="M1168.2,702.9 C1168.2,703.3 1167.9,704.4 1168.2,706.9 C1168.5,709.4 1170.0,725.6 1170.9,728.3 C1171.8,731.0 1174.8,732.9 1177.6,733.6 C1180.4,734.3 1196.0,735.7 1199.0,735.0 C1202.0,734.3 1206.8,728.2 1208.0,726.4 C1209.2,724.6 1210.4,717.9 1210.7,717.0" fill="none" stroke="#3d3526" stroke-width="1.1" stroke-linejoin="round"/>
<path d="M1134.0,742.0 C1134.7,741.5 1139.0,737.6 1141.0,736.5 C1143.0,735.4 1151.6,732.0 1154.4,731.4 C1157.2,730.8 1167.0,730.6 1169.3,730.8 C1171.6,731.0 1176.8,733.3 1177.6,733.6" fill="none" stroke="#3d3526" stroke-width="1.1" stroke-linejoin="round"/>
<path d="M1177.6,733.6 C1177.6,735.5 1176.8,748.3 1177.6,752.4 C1178.4,756.5 1185.1,771.0 1185.8,774.4 C1186.5,777.8 1184.7,783.9 1185.0,786.5 C1185.3,789.1 1189.0,797.5 1188.4,800.2 C1187.8,803.0 1180.2,811.9 1178.9,814.0 C1177.6,816.1 1175.7,818.8 1175.5,820.9 C1175.3,823.0 1177.8,832.0 1177.2,834.6 C1176.6,837.2 1171.4,845.7 1169.5,846.7 C1167.6,847.7 1159.4,845.2 1158.3,845.0" fill="none" stroke="#3d3526" stroke-width="1.1" stroke-linejoin="round"/>
<path d="M1134.0,742.0 C1133.8,742.4 1131.6,744.7 1132.0,745.7 C1132.4,746.7 1137.5,750.5 1138.2,751.9 C1139.0,753.3 1140.0,758.0 1139.5,759.4 C1139.0,760.8 1133.6,762.3 1133.0,766.0 C1132.4,769.7 1132.5,793.4 1133.3,796.8 C1134.1,800.2 1140.0,798.3 1141.1,800.2 C1142.2,802.1 1143.5,812.4 1144.5,815.7 C1145.5,819.0 1150.3,830.2 1151.4,832.9 C1152.5,835.6 1155.4,841.5 1155.8,842.5" fill="none" stroke="#3d3526" stroke-width="1.1" stroke-linejoin="round"/>
<path d="M1122.0,682.9 C1121.9,683.5 1121.5,687.0 1120.8,688.5 C1120.1,690.0 1115.3,696.7 1114.6,698.4 C1113.9,700.1 1114.1,704.8 1113.4,705.9 C1112.7,707.0 1108.0,708.5 1107.8,709.6 C1107.5,710.7 1110.6,715.6 1110.9,717.1 C1111.2,718.6 1110.5,723.1 1110.9,724.5 C1111.3,725.9 1113.4,729.8 1114.6,730.8 C1115.8,731.8 1122.3,733.6 1123.3,734.5 C1124.3,735.4 1124.9,738.3 1124.5,739.5 C1124.1,740.7 1120.9,745.3 1119.6,746.9 C1118.3,748.5 1113.3,753.4 1111.8,755.5 C1110.3,757.6 1105.2,764.6 1104.9,767.5 C1104.6,770.4 1107.5,780.6 1108.4,784.7 C1109.3,788.8 1113.3,805.7 1113.5,808.8 C1113.7,811.9 1110.4,815.0 1110.1,815.7" fill="none" stroke="#3d3526" stroke-width="1.1" stroke-linejoin="round"/>
<path d="M1111.8,755.5 C1110.6,754.9 1101.7,749.5 1099.8,749.5 C1097.9,749.5 1094.5,754.6 1092.9,755.5 C1091.4,756.4 1085.5,757.9 1084.3,758.9 C1083.1,759.9 1082.8,763.1 1080.9,765.8 C1079.0,768.5 1066.7,783.8 1065.1,785.8" fill="none" stroke="#3d3526" stroke-width="1.1" stroke-linejoin="round"/>
<path d="M1067.8,690.7 C1067.3,692.3 1063.7,702.8 1062.5,706.8 C1061.3,710.8 1056.7,726.9 1055.8,730.9 C1054.9,734.9 1053.6,743.1 1053.1,746.9 C1052.6,750.6 1050.7,766.2 1050.4,768.4" fill="none" stroke="#3d3526" stroke-width="1.1" stroke-linejoin="round"/>
<path d="M1070.5,690.7 C1070.0,692.7 1066.3,706.5 1065.1,710.8 C1063.9,715.1 1059.3,729.6 1058.4,733.5 C1057.5,737.4 1056.2,745.9 1055.8,749.6 C1055.4,753.4 1053.5,767.4 1054.4,771.0 C1055.3,774.6 1064.3,783.8 1065.1,785.8 C1065.9,787.8 1063.6,789.6 1062.5,791.1 C1061.4,792.6 1055.5,798.2 1054.4,800.5 C1053.3,802.8 1052.1,812.6 1051.8,813.9" fill="none" stroke="#3d3526" stroke-width="1.1" stroke-linejoin="round"/>
<path d="M848.3,698.0 C848.7,696.1 851.4,681.4 852.5,678.6 C853.6,675.8 857.0,670.3 859.4,670.3 C861.8,670.3 873.5,677.5 876.0,678.6 C878.5,679.7 883.4,679.2 884.4,681.4 C885.4,683.6 885.2,698.0 885.7,700.8 C886.2,703.6 888.1,708.0 889.9,709.1 C891.7,710.2 900.5,712.4 903.8,711.9 C907.1,711.4 917.1,706.4 923.2,703.6 C929.3,700.8 960.4,689.5 964.8,684.2 C969.2,678.9 964.2,654.8 967.5,650.9 C970.8,647.0 993.0,645.3 998.0,645.3 C1003.0,645.3 1015.5,650.3 1017.4,650.9" fill="none" stroke="#3d3526" stroke-width="1.1" stroke-linejoin="round"/>
<path d="M964.8,681.4 C967.0,683.3 985.0,697.8 986.9,700.8 C988.8,703.8 983.0,709.1 984.2,711.9 C985.5,714.7 997.9,724.7 999.4,728.5 C1000.9,732.3 999.5,747.5 999.5,749.6" fill="none" stroke="#3d3526" stroke-width="1.1" stroke-linejoin="round"/>
<path d="M999.5,749.6 C1000.7,749.3 1009.1,747.7 1011.6,746.9 C1014.1,746.1 1023.3,742.0 1025.0,741.6 C1026.7,741.2 1028.3,742.1 1029.0,742.9 C1029.7,743.7 1030.4,748.7 1031.7,749.6 C1033.0,750.5 1041.2,751.5 1042.4,752.3 C1043.6,753.1 1044.0,756.4 1043.7,757.7 C1043.4,759.0 1040.2,764.4 1039.7,765.7 C1039.2,767.0 1038.1,770.3 1038.4,771.0 C1038.7,771.7 1041.3,772.7 1042.4,772.4 C1043.5,772.1 1048.3,768.7 1049.1,768.4 C1049.9,768.1 1049.6,768.4 1050.4,769.7 C1051.2,771.0 1056.6,780.1 1057.1,781.8 C1057.6,783.5 1056.9,786.2 1055.8,787.1 C1054.7,788.0 1047.7,790.6 1046.4,791.1 C1045.1,791.6 1044.0,792.8 1042.4,792.5 C1040.8,792.2 1032.6,789.4 1030.3,788.5 C1028.0,787.6 1021.9,784.3 1019.6,783.1 C1017.3,781.9 1009.2,777.5 1007.6,776.4 C1006.0,775.3 1005.3,773.5 1003.6,772.4 C1001.9,771.3 992.2,766.9 990.2,765.7 C988.2,764.5 983.8,761.1 983.5,760.3 C983.2,759.5 986.0,758.1 987.5,757.7 C989.0,757.3 996.9,756.8 998.2,756.3 C999.5,755.8 1000.8,753.0 1000.9,752.3 C1001.0,751.6 999.6,749.9 999.5,749.6" fill="none" stroke="#3d3526" stroke-width="1.1" stroke-linejoin="round"/>
<path d="M1210.7,717.0 C1211.6,716.3 1218.4,711.2 1220.1,710.3 C1221.8,709.4 1226.1,707.6 1228.1,707.6 C1230.1,707.6 1238.1,710.3 1240.2,710.3 C1242.3,710.3 1247.1,708.4 1249.5,707.6 C1251.9,706.8 1261.5,703.2 1264.2,702.3 C1266.9,701.4 1275.2,699.2 1276.3,698.3 C1277.4,697.4 1274.6,693.8 1275.0,692.9 C1275.4,692.0 1278.2,690.2 1280.3,689.6 C1282.4,689.0 1293.6,686.9 1296.4,686.9 C1299.2,686.9 1307.2,689.3 1308.4,689.6" fill="none" stroke="#3d3526" stroke-width="1.1" stroke-linejoin="round"/>
<path d="M1228.1,707.6 C1228.2,708.1 1229.0,712.2 1229.4,713.0 C1229.8,713.8 1232.4,714.6 1232.1,715.7 C1231.8,716.8 1227.6,722.9 1226.8,723.7 C1226.0,724.5 1225.0,724.2 1224.1,723.7 C1223.2,723.2 1218.6,719.0 1217.4,718.3 C1216.2,717.6 1212.7,716.5 1212.0,717.0 C1211.3,717.5 1209.6,722.1 1210.0,723.7 C1210.4,725.3 1215.5,732.1 1216.1,733.0" fill="none" stroke="#3d3526" stroke-width="1.1" stroke-linejoin="round"/>
<path d="M1283.0,754.5 C1282.9,751.7 1281.2,729.4 1281.6,726.4 C1282.0,723.4 1285.9,724.1 1287.0,724.4 C1288.1,724.7 1291.7,726.4 1292.4,729.0 C1293.1,731.6 1293.6,748.4 1293.7,750.5" fill="none" stroke="#3d3526" stroke-width="1.1" stroke-linejoin="round"/>
<path d="M1292.4,729.0 C1293.2,728.8 1299.5,728.3 1300.4,727.0 C1301.3,725.7 1301.0,717.0 1301.7,715.7 C1302.4,714.4 1306.6,714.4 1307.1,714.3" fill="none" stroke="#3d3526" stroke-width="1.1" stroke-linejoin="round"/>
<path d="M1080.9,765.8 C1081.2,765.4 1082.6,762.6 1083.5,762.3 C1084.4,762.0 1089.1,763.9 1090.0,763.2 C1090.9,762.5 1092.6,756.3 1092.9,755.5" fill="none" stroke="#3d3526" stroke-width="1.1" stroke-linejoin="round"/>
<path d="M1170.4,666.0 C1171.1,665.9 1175.5,664.5 1177.0,664.5 C1178.5,664.5 1184.2,664.9 1185.1,665.5 C1186.0,666.1 1186.3,670.1 1186.0,671.0 C1185.7,671.9 1183.4,673.7 1182.0,674.0 C1180.6,674.3 1173.2,674.6 1172.0,673.8 C1170.8,673.0 1170.6,666.8 1170.4,666.0" fill="none" stroke="#3d3526" stroke-width="1.1" stroke-linejoin="round"/>
</svg>
<div class="a" style="left:779.0px;top:460.8px;width:120px;text-align:center;font-size:12px;line-height:16px;color:#433b2e">Agwara</div>
<div class="a" style="left:714.0px;top:528.2px;width:120px;text-align:center;font-size:12px;line-height:16px;color:#433b2e">Borgu</div>
<div class="a" style="left:885.4px;top:409.4px;width:120px;text-align:center;font-size:12px;line-height:16px;color:#433b2e">Rijau</div>
<div class="a" style="left:998.9px;top:478.5px;width:120px;text-align:center;font-size:12px;line-height:16px;color:#433b2e">Mariga</div>
<div class="a" style="left:854.3px;top:530.0px;width:120px;text-align:center;font-size:12px;line-height:16px;color:#433b2e">Magama</div>
<div class="a" style="left:939.5px;top:520.8px;width:120px;text-align:center;font-size:12px;line-height:16px;color:#433b2e">Kontogur</div>
<div class="a" style="left:898.5px;top:617.2px;width:120px;text-align:center;font-size:12px;line-height:16px;color:#433b2e">Mashegu</div>
<div class="a" style="left:1072.6px;top:564.5px;width:120px;text-align:center;font-size:12px;line-height:16px;color:#433b2e">Rafi</div>
<div class="a" style="left:1145.1px;top:574.6px;width:120px;text-align:center;font-size:12px;line-height:16px;color:#433b2e">Shiroro</div>
<div class="a" style="left:1205.0px;top:626.5px;width:120px;text-align:center;font-size:12px;line-height:16px;color:#433b2e">Muya</div>
<div class="a" style="left:1018.4px;top:657.3px;width:120px;text-align:center;font-size:12px;line-height:16px;color:#433b2e">Wushishi</div>
<div class="a" style="left:1094.6px;top:652.8px;width:120px;text-align:center;font-size:12px;line-height:16px;color:#433b2e">Chanchaga</div>
<div class="a" style="left:1084.1px;top:670.7px;width:120px;text-align:center;font-size:12px;line-height:16px;color:#433b2e">Bosso</div>
<div class="a" style="left:1155.0px;top:690.9px;width:120px;text-align:center;font-size:12px;line-height:16px;color:#433b2e">Paikoro</div>
<div class="a" style="left:956.0px;top:692.8px;width:120px;text-align:center;font-size:12px;line-height:16px;color:#433b2e">Lavun</div>
<div class="a" style="left:883.1px;top:723.3px;width:120px;text-align:center;font-size:12px;line-height:16px;color:#433b2e">Mokwa</div>
<div class="a" style="left:1026.7px;top:716.4px;width:120px;text-align:center;font-size:12px;line-height:16px;color:#433b2e">Gbako</div>
<div class="a" style="left:1191.2px;top:718.2px;width:120px;text-align:center;font-size:12px;line-height:16px;color:#433b2e">Gurara</div>
<div class="a" style="left:1253.9px;top:717.7px;width:120px;text-align:center;font-size:12px;line-height:16px;color:#5d5f6e">Tafa</div>
<div class="a" style="left:1018.0px;top:743.2px;width:120px;text-align:center;font-size:12px;line-height:16px;color:#433b2e">Bida</div>
<div class="a" style="left:1215.2px;top:741.2px;width:120px;text-align:center;font-size:12px;line-height:16px;color:#5d5f6e">Suleja</div>
<div class="a" style="left:1090.7px;top:737.2px;width:120px;text-align:center;font-size:12px;line-height:16px;color:#433b2e">Katcha</div>
<div class="a" style="left:963.3px;top:760.5px;width:120px;text-align:center;font-size:12px;line-height:16px;color:#433b2e">Edati</div>
<div class="a" style="left:1100.1px;top:777.5px;width:120px;text-align:center;font-size:12px;line-height:16px;color:#433b2e">Agaie</div>
<div class="a" style="left:1138.8px;top:812.8px;width:120px;text-align:center;font-size:12px;line-height:16px;color:#433b2e">Lapai</div>
<svg style="left:0;top:0" width="1916" height="1046"><path d="M1197.4 654.3V676.3L1202.3 671.8L1206.5 679.2L1210.6 677.6L1207 670.8H1214.4Z" fill="#fff" stroke="#222" stroke-width="1" stroke-linejoin="miter"/></svg>
<svg style="left:0;top:0" width="1916" height="1046"><g fill="none" stroke="#7393a3" stroke-width="1.25">
<rect x="643.6" y="305.5" width="754.4" height="604.4"/>
<rect x="643.6" y="305.5" width="14.8" height="14.8" rx="0.8"/>
<rect x="643.6" y="600.2" width="14.8" height="14.8" rx="0.8"/>
<rect x="643.6" y="895.4" width="14.8" height="14.8" rx="0.8"/>
<rect x="1013.4" y="305.5" width="14.8" height="14.8" rx="0.8"/>
<rect x="1013.4" y="895.4" width="14.8" height="14.8" rx="0.8"/>
<rect x="1383.3" y="305.5" width="14.8" height="14.8" rx="0.8"/>
<rect x="1383.3" y="600.2" width="14.8" height="14.8" rx="0.8"/>
<rect x="1383.3" y="895.4" width="14.8" height="14.8" rx="0.8"/>
</g></svg>
<svg style="left:0;top:0" width="1916" height="1046"><path d="M1195.5 150V178M59 656.5H86" stroke="#d04060" stroke-width="1" opacity="0.8"/></svg>
<div class="st" style="left:1116px">x: 205.52 mm</div>
<div class="st" style="left:1275px">y: 124.451 mm</div>
<div class="st" style="left:1434px">page: 1</div>
<div class="a" style="left:1593px;top:1011px;width:163px;height:32px;background:#fff;border:1px solid #b5b5b5;border-radius:3px"></div>
<div class="a" style="left:1725px;top:1012px;width:30px;height:30px;background:#f4f4f4;border-left:1px solid #c8c8c8;border-radius:0 3px 3px 0"></div>
<svg style="left:1733px;top:1022px" width="14" height="10"><path d="M1 1H13L7 8Z" fill="#555"/></svg>
<div class="st" style="left:1599px;top:1019px">55.1%</div>
<div class="a" style="left:1768px;top:1023px;width:147px;height:7px;background:#e4e4e4;border:1px solid #bcbcbc;border-radius:3px"></div>
<div class="a" style="left:1768px;top:1023px;width:10px;height:7px;background:#3d7fc6;border:1px solid #2f67a7;border-radius:3px"></div>
<div class="a" style="left:1774px;top:1017px;width:19px;height:19px;background:#fafafa;border:1px solid #a8a8a8;border-radius:4px"></div>
<svg style="left:0;top:0" width="1916" height="1046"><rect x="5" y="49.5" width="1.2" height="1.4" fill="#9a9a9a"/><rect x="9.6" y="49.5" width="1.6" height="1.4" fill="#9a9a9a"/><rect x="5" y="54.0" width="1.2" height="1.4" fill="#9a9a9a"/><rect x="9.6" y="54.0" width="1.6" height="1.4" fill="#9a9a9a"/><rect x="5" y="58.5" width="1.2" height="1.4" fill="#9a9a9a"/><rect x="9.6" y="58.5" width="1.6" height="1.4" fill="#9a9a9a"/><rect x="5" y="63.0" width="1.2" height="1.4" fill="#9a9a9a"/><rect x="9.6" y="63.0" width="1.6" height="1.4" fill="#9a9a9a"/><rect x="5" y="67.5" width="1.2" height="1.4" fill="#9a9a9a"/><rect x="9.6" y="67.5" width="1.6" height="1.4" fill="#9a9a9a"/><rect x="5" y="72.0" width="1.2" height="1.4" fill="#9a9a9a"/><rect x="9.6" y="72.0" width="1.6" height="1.4" fill="#9a9a9a"/><rect x="26.8" y="44.8" width="28.4" height="30.4" rx="3" fill="#6f93be" stroke="#4a6586" stroke-width="1.6"/><rect x="31" y="46" width="20" height="13" fill="#fff"/><rect x="34" y="49" width="14" height="1.5" fill="#555"/><rect x="34" y="52" width="14" height="1.5" fill="#555"/><rect x="34" y="55" width="14" height="1.5" fill="#555"/><rect x="32.5" y="64" width="17" height="11" fill="#e9e9ee"/><rect x="34" y="66.5" width="4.5" height="6" fill="#4a5a70"/><path d="M70.5 47V75" stroke="#d3d3d3" stroke-width="1"/><path d="M85.5 46.5H109L116.5 54V75.5H85.5Z" fill="#fff" stroke="#7a7a7a" stroke-width="1.6" stroke-linejoin="round"/><path d="M109 46.5V54H116.5" fill="#eee" stroke="#7a7a7a" stroke-width="1.4" stroke-linejoin="round"/><path d="M87.5 48H101V55H94.5V76.5H87.5Z" fill="#f7d85a" stroke="#d9b93a" stroke-width="1"/><path d="M88 58.0H91" stroke="#b89a2a" stroke-width="1"/><path d="M88 61.2H91" stroke="#b89a2a" stroke-width="1"/><path d="M88 64.4H91" stroke="#b89a2a" stroke-width="1"/><path d="M88 67.6H91" stroke="#b89a2a" stroke-width="1"/><path d="M88 70.8H91" stroke="#b89a2a" stroke-width="1"/><path d="M88 74.0H91" stroke="#b89a2a" stroke-width="1"/><rect x="102.5" y="62.5" width="16" height="16" rx="3" fill="#c3a624" stroke="#e7d36a" stroke-width="0.8"/><g stroke="#fffbe0" stroke-width="1.8" stroke-linecap="round"><path d="M110.5 65.0V76.0M105.7 67.7L115.3 73.3M105.7 73.3L115.3 67.7"/></g><circle cx="110.5" cy="70.5" r="3" fill="#fffbe0"/><circle cx="110.5" cy="70.5" r="1.2" fill="#c3a624"/><rect x="132" y="47" width="27" height="28.5" fill="#c9c9c9" stroke="#7a7a7a" stroke-width="1.5"/><path d="M137.5 43.5H161L167.5 50V70.5H137.5Z" fill="#fff" stroke="#7a7a7a" stroke-width="1.6" stroke-linejoin="round"/><path d="M161 43.5V50H167.5" fill="#eee" stroke="#7a7a7a" stroke-width="1.4" stroke-linejoin="round"/><rect x="141" y="48" width="22" height="19" fill="none" stroke="#d0d0d0" stroke-width="1"/><rect x="152" y="62.5" width="16" height="16" rx="3" fill="#c3a624" stroke="#e7d36a" stroke-width="0.8"/><g stroke="#fffbe0" stroke-width="1.8" stroke-linecap="round"><path d="M160.0 65.0V76.0M155.2 67.7L164.8 73.3M155.2 73.3L164.8 67.7"/></g><circle cx="160.0" cy="70.5" r="3" fill="#fffbe0"/><circle cx="160.0" cy="70.5" r="1.2" fill="#c3a624"/><path d="M184.5 46.5H208L216.5 55V75.5H184.5Z" fill="#fff" stroke="#7a7a7a" stroke-width="1.6" stroke-linejoin="round"/><path d="M208 46.5V55H216.5" fill="#eee" stroke="#7a7a7a" stroke-width="1.4" stroke-linejoin="round"/><rect x="187.5" y="49.5" width="25" height="23" fill="none" stroke="#d6d6d6" stroke-width="1.2"/><path d="M204 62L215 76" stroke="#333" stroke-width="6" stroke-linecap="round"/><path d="M204.6 62.8L214.4 75.3" stroke="#ddd69a" stroke-width="3.6" stroke-linecap="round"/><path d="M201.05 53.96A4.3 4.3 0 1 1 196.06 57.45" fill="none" stroke="#333" stroke-width="5.2"/><path d="M201.05 53.96A4.3 4.3 0 1 1 196.06 57.45" fill="none" stroke="#f0f0f0" stroke-width="2.8"/><path d="M232.5 50V73.5H262L265 55H255V52H243L241 49.5H233Z" fill="#f1c94b" stroke="#c9a02c" stroke-width="1"/><path d="M232.5 73.5L237 56H265.5L261.5 73.5Z" fill="#fdd552" stroke="#c9a02c" stroke-width="1"/><rect x="284.8" y="44.8" width="28.4" height="30.4" rx="3" fill="#6f93be" stroke="#4a6586" stroke-width="1.6"/><rect x="289" y="46" width="20" height="13" fill="#fff"/><rect x="292" y="49" width="14" height="1.5" fill="#555"/><rect x="292" y="52" width="14" height="1.5" fill="#555"/><rect x="292" y="55" width="14" height="1.5" fill="#555"/><rect x="290.5" y="64" width="17" height="11" fill="#e9e9ee"/><rect x="292" y="66.5" width="4.5" height="6" fill="#4a5a70"/><rect x="302" y="64" width="15" height="15" rx="3" fill="#5a9363"/><path d="M305.5 75.5L313.5 67.5" stroke="#e9f5e9" stroke-width="2.4" stroke-linecap="round"/><path d="M329.5 47V75" stroke="#d3d3d3" stroke-width="1"/><path d="M347.5 45.0H363L370.5 52.5V76.0H347.5Z" fill="#fff" stroke="#7a7a7a" stroke-width="1.6" stroke-linejoin="round"/><path d="M363 45.0V52.5H370.5" fill="#eee" stroke="#7a7a7a" stroke-width="1.4" stroke-linejoin="round"/><rect x="361" y="62.5" width="16" height="16" rx="3" fill="#c3a624" stroke="#e7d36a" stroke-width="0.8"/><g stroke="#fffbe0" stroke-width="1.8" stroke-linecap="round"><path d="M369.0 65.0V76.0M364.2 67.7L373.8 73.3M364.2 73.3L373.8 67.7"/></g><circle cx="369.0" cy="70.5" r="3" fill="#fffbe0"/><circle cx="369.0" cy="70.5" r="1.2" fill="#c3a624"/><path d="M388.5 47V75" stroke="#d3d3d3" stroke-width="1"/><rect x="412" y="46.5" width="14" height="9" fill="#e5e8ee" stroke="#8a8a8a" stroke-width="1.2"/><rect x="404.5" y="52.5" width="29" height="15" rx="3.5" fill="#7d9dc4" stroke="#44607f" stroke-width="1.6"/><rect x="412" y="62" width="14" height="13.5" fill="#f4f4f4" stroke="#8a8a8a" stroke-width="1.2"/><path d="M414.5 66H423.5M414.5 69H423.5M414.5 72H423.5" stroke="#888" stroke-width="1"/><path d="M452.5 44.0H468L474.5 50.5V75.0H452.5Z" fill="#fff" stroke="#7a7a7a" stroke-width="1.6" stroke-linejoin="round"/><path d="M468 44.0V50.5H474.5" fill="#eee" stroke="#7a7a7a" stroke-width="1.4" stroke-linejoin="round"/><rect x="453.5" y="54" width="20" height="15" fill="#5aa5de"/><path d="M453.5 63L462 57.5L473.5 62V69H453.5Z" fill="#c8a93e"/><path d="M453.5 66L473.5 64V69H453.5Z" fill="#9c8a36"/><rect x="470" y="62.5" width="16" height="16" rx="3" fill="#3e5158"/><path d="M476.5 66.5H473.5V74.5H476.5M476 70.5H483M480 67.5L483 70.5L480 73.5" fill="none" stroke="#fff" stroke-width="1.8"/><path d="M502.5 43.5H518L524.5 50V75.0H502.5Z" fill="#fff" stroke="#7a7a7a" stroke-width="1.6" stroke-linejoin="round"/><path d="M518 43.5V50H524.5" fill="#eee" stroke="#7a7a7a" stroke-width="1.4" stroke-linejoin="round"/><g stroke="#e6a93a" stroke-width="2.4" stroke-linecap="round"><path d="M513.5 53V70M505.5 61.5H521.5M507.8 55.8L519.2 67.2M507.8 67.2L519.2 55.8"/></g><circle cx="513.5" cy="61.5" r="2.5" fill="#e6a93a"/><rect x="520" y="62.5" width="16" height="16" rx="3" fill="#3e5060"/><path d="M526.5 66.5H523.5V74.5H526.5M526 70.5H533M530 67.5L533 70.5L530 73.5" fill="none" stroke="#fff" stroke-width="1.8"/><path d="M551.5 43.5H567L573.5 50V75.0H551.5Z" fill="#fff" stroke="#7a7a7a" stroke-width="1.6" stroke-linejoin="round"/><path d="M567 43.5V50H573.5" fill="#eee" stroke="#7a7a7a" stroke-width="1.4" stroke-linejoin="round"/><path d="M561 52C558 58 562 62 566 68C568 70 563 68 558 68C552 69 552 72 554 71C556 70 560 64 562 54C562 51 560 51 561 52Z" fill="none" stroke="#c8332a" stroke-width="1.2"/><rect x="569.5" y="62.5" width="16" height="16" rx="3" fill="#364f55"/><path d="M576.0 66.5H573.0V74.5H576.0M575.5 70.5H582.5M579.5 67.5L582.5 70.5L579.5 73.5" fill="none" stroke="#fff" stroke-width="1.8"/><path d="M604 59.5L613.5 48V54H619C628 54 631 60 630 66C629 72 623 74.5 618 74L619 68C622 68.5 623.5 66.5 623.5 64.5C623.5 62 621.5 61 619 61H613.5V70.5Z" fill="#e8732d" stroke="#c95e22" stroke-width="0.9" stroke-linejoin="round"/><path d="M679.5 59.5L670 48V54H664.5C655.5 54 652.5 60 653.5 66C654.5 72 660.5 74.5 665.5 74L664.5 68C661.5 68.5 660 66.5 660 64.5C660 62 662 61 664.5 61H670V70.5Z" fill="#dedede" stroke="#d2d2d2" stroke-width="0.9" stroke-linejoin="round"/><rect x="704.5" y="50.0" width="1.2" height="1.4" fill="#9a9a9a"/><rect x="709.1" y="50.0" width="1.6" height="1.4" fill="#9a9a9a"/><rect x="704.5" y="54.5" width="1.2" height="1.4" fill="#9a9a9a"/><rect x="709.1" y="54.5" width="1.6" height="1.4" fill="#9a9a9a"/><rect x="704.5" y="59.0" width="1.2" height="1.4" fill="#9a9a9a"/><rect x="709.1" y="59.0" width="1.6" height="1.4" fill="#9a9a9a"/><rect x="704.5" y="63.5" width="1.2" height="1.4" fill="#9a9a9a"/><rect x="709.1" y="63.5" width="1.6" height="1.4" fill="#9a9a9a"/><rect x="704.5" y="68.0" width="1.2" height="1.4" fill="#9a9a9a"/><rect x="709.1" y="68.0" width="1.6" height="1.4" fill="#9a9a9a"/><rect x="704.5" y="72.5" width="1.2" height="1.4" fill="#9a9a9a"/><rect x="709.1" y="72.5" width="1.6" height="1.4" fill="#9a9a9a"/><rect x="723" y="48" width="34" height="26" rx="5" fill="#ececec" stroke="#c7c7c7" stroke-width="1.6"/><path d="M727 55h8v3h-3v4h-3zM737 53h6v5h-4v8h-3v-6zM745 53h8v3h-3v5h-4z" fill="#d2d2d2"/><path d="M723.5 61H756.5M740 48.5V73.5M731 48.5V73.5M748 48.5V73.5" stroke="#dcdcdc" stroke-width="0.8"/><rect x="774.5" y="45.5" width="4" height="31" fill="#d6d6d6" stroke="#cbcbcb" stroke-width="0.8"/><path d="M778.5 61L793.5 46.5V55.5H803.5V66H793.5V75.5Z" fill="#d6d6d6" stroke="#c9c9c9" stroke-width="0.9" stroke-linejoin="round"/><path d="M827 61L841.5 46.5V55.5H851.5V66H841.5V75.5Z" fill="#d6d6d6" stroke="#c9c9c9" stroke-width="0.9" stroke-linejoin="round"/><rect x="864.5" y="39.5" width="98" height="43.5" rx="3" fill="#f0f0f0" stroke="#b7b7b7" stroke-width="1"/><rect x="932" y="40" width="30" height="42.5" rx="2" fill="#f6f6f6"/><path d="M939.5 58H950.5L945 64Z" fill="#7a7a7a"/><text x="870" y="69" font-family="Liberation Sans" font-size="17" fill="#333">1</text><path d="M1001 61L986.5 46.5V55.5H976.5V66H986.5V75.5Z" fill="#d6d6d6" stroke="#c9c9c9" stroke-width="0.9" stroke-linejoin="round"/><rect x="1049" y="45.5" width="4" height="31" fill="#d6d6d6" stroke="#cbcbcb" stroke-width="0.8"/><path d="M1049 61L1034 46.5V55.5H1023.5V66H1034V75.5Z" fill="#d6d6d6" stroke="#c9c9c9" stroke-width="0.9" stroke-linejoin="round"/><rect x="1081" y="46.5" width="14" height="9" fill="#ececec" stroke="#dadada" stroke-width="1.2"/><rect x="1073.5" y="52.5" width="29" height="15" rx="3.5" fill="#d9d9d9" stroke="#d0d0d0" stroke-width="1.6"/><rect x="1081" y="62" width="14" height="13.5" fill="#f2f2f2" stroke="#d6d6d6" stroke-width="1.2"/><path d="M1083.5 66H1092.5M1083.5 69H1092.5M1083.5 72H1092.5" stroke="#d6d6d6" stroke-width="1"/><path d="M1121.5 44.0H1137L1143.5 50.5V75.0H1121.5Z" fill="#f6f6f6" stroke="#d8d8d8" stroke-width="1.6" stroke-linejoin="round"/><path d="M1137 44.0V50.5H1143.5" fill="#eee" stroke="#d8d8d8" stroke-width="1.4" stroke-linejoin="round"/><rect x="1122.5" y="54" width="20" height="15" fill="#d6d6d6"/><rect x="1139" y="62.5" width="16" height="16" rx="3" fill="#cfcfcf"/><path d="M1145.5 66.5H1142.5V74.5H1145.5M1145 70.5H1152M1149 67.5L1152 70.5L1149 73.5" fill="none" stroke="#f0f0f0" stroke-width="1.6"/><path d="M1164.5 58.5H1175.5L1170 64.5Z" fill="#9a9a9a"/><rect x="1188" y="45.5" width="29.5" height="24" rx="5" fill="#b2c1d8" stroke="#66788f" stroke-width="1.6"/><path d="M1188.5 57H1217M1202.5 46V69M1195 46V69M1210 46V69M1188.5 51H1217M1188.5 63H1217" stroke="#dae3ef" stroke-width="0.8"/><path d="M1208 63L1220.5 76.5" stroke="#3a3a3a" stroke-width="5.6" stroke-linecap="round"/><path d="M1208.6 63.8L1220 76" stroke="#e0c870" stroke-width="3.2" stroke-linecap="round"/><path d="M1199.5 56A5.5 5.5 0 1 0 1205.5 52" fill="none" stroke="#3a3a3a" stroke-width="4.6"/><path d="M1199.5 56A5.5 5.5 0 1 0 1205.5 52" fill="none" stroke="#e8e8e8" stroke-width="2.2"/><rect x="5" y="108.5" width="1.2" height="1.4" fill="#9a9a9a"/><rect x="9.6" y="108.5" width="1.6" height="1.4" fill="#9a9a9a"/><rect x="5" y="113.0" width="1.2" height="1.4" fill="#9a9a9a"/><rect x="9.6" y="113.0" width="1.6" height="1.4" fill="#9a9a9a"/><rect x="5" y="117.5" width="1.2" height="1.4" fill="#9a9a9a"/><rect x="9.6" y="117.5" width="1.6" height="1.4" fill="#9a9a9a"/><rect x="5" y="122.0" width="1.2" height="1.4" fill="#9a9a9a"/><rect x="9.6" y="122.0" width="1.6" height="1.4" fill="#9a9a9a"/><rect x="5" y="126.5" width="1.2" height="1.4" fill="#9a9a9a"/><rect x="9.6" y="126.5" width="1.6" height="1.4" fill="#9a9a9a"/><rect x="5" y="131.0" width="1.2" height="1.4" fill="#9a9a9a"/><rect x="9.6" y="131.0" width="1.6" height="1.4" fill="#9a9a9a"/><path d="M37.56 122.94L25.799999999999997 134.1" stroke="#3a3a3a" stroke-width="5.5" stroke-linecap="round"/><path d="M36.0 124.5L26.4 133.5" stroke="#e3cc7a" stroke-width="3" stroke-linecap="butt"/><circle cx="45" cy="115.5" r="12" fill="#ececec" stroke="#6a6a6a" stroke-width="1.8"/><path d="M37 116.3H53M45 108V124.5" stroke="#5b86c0" stroke-width="4" stroke-linecap="round"/><path d="M86.06 122.94L74.3 134.1" stroke="#3a3a3a" stroke-width="5.5" stroke-linecap="round"/><path d="M84.5 124.5L74.9 133.5" stroke="#e3cc7a" stroke-width="3" stroke-linecap="butt"/><circle cx="93.5" cy="115.5" r="12" fill="#ececec" stroke="#6a6a6a" stroke-width="1.8"/><path d="M86 116.3H101" stroke="#5b86c0" stroke-width="4" stroke-linecap="round"/><rect x="125.5" y="105.5" width="9" height="19" fill="#ededed" stroke="#8a8a8a" stroke-width="1"/><path d="M136.06 122.94L124.3 134.1" stroke="#3a3a3a" stroke-width="5.5" stroke-linecap="round"/><path d="M134.5 124.5L124.9 133.5" stroke="#e3cc7a" stroke-width="3" stroke-linecap="butt"/><circle cx="143.5" cy="115.5" r="12" fill="#ececec" stroke="#6a6a6a" stroke-width="1.8"/><text x="143.5" y="121.5" text-anchor="middle" font-family="Liberation Sans" font-weight="bold" font-size="13" fill="#2a2a2a">1:1</text><path d="M184 125L173.5 134.5" stroke="#333" stroke-width="5" stroke-linecap="butt"/><path d="M183 126L174.5 133.5" stroke="#e3cc7a" stroke-width="2.6"/><circle cx="183.5" cy="125.5" r="1.8" fill="#111"/><circle cx="192.5" cy="116.5" r="12" fill="#ececec" stroke="#8a8a8a" stroke-width="1.3"/><g fill="#6589c0" stroke="#3f5f8c" stroke-width="0.9" stroke-linejoin="miter"><path d="M176.5 102.5L188.5 102.5L184.06 106.94L188.26 111.14L185.14 114.26L180.94 110.06L176.5 114.5Z"/><path d="M206.5 102.5L194.5 102.5L198.94 106.94L194.74 111.14L197.86 114.26L202.06 110.06L206.5 114.5Z"/><path d="M206.5 132.5L194.5 132.5L198.94 128.06L194.74 123.86L197.86 120.74L202.06 124.94L206.5 120.5Z"/></g><path d="M226 116C226 106 236 102.5 243 104.5C246 105.5 248 107 249 108.5L253.5 103.5V117H240L244.5 112.5C240 108.5 233 109.5 230 114Z" fill="#4f86c6" stroke="#3d6ea8" stroke-width="0.8"/><path d="M252.5 123C252.5 133 242.5 136.5 235.5 134.5C232.5 133.5 230.5 132 229.5 130.5L225 135.5V122H238.5L234 126.5C238.5 130.5 245.5 129.5 248.5 125Z" fill="#4f86c6" stroke="#3d6ea8" stroke-width="0.8"/><rect x="276.5" y="108.5" width="1.2" height="1.4" fill="#9a9a9a"/><rect x="281.1" y="108.5" width="1.6" height="1.4" fill="#9a9a9a"/><rect x="276.5" y="113.0" width="1.2" height="1.4" fill="#9a9a9a"/><rect x="281.1" y="113.0" width="1.6" height="1.4" fill="#9a9a9a"/><rect x="276.5" y="117.5" width="1.2" height="1.4" fill="#9a9a9a"/><rect x="281.1" y="117.5" width="1.6" height="1.4" fill="#9a9a9a"/><rect x="276.5" y="122.0" width="1.2" height="1.4" fill="#9a9a9a"/><rect x="281.1" y="122.0" width="1.6" height="1.4" fill="#9a9a9a"/><rect x="276.5" y="126.5" width="1.2" height="1.4" fill="#9a9a9a"/><rect x="281.1" y="126.5" width="1.6" height="1.4" fill="#9a9a9a"/><rect x="276.5" y="131.0" width="1.2" height="1.4" fill="#9a9a9a"/><rect x="281.1" y="131.0" width="1.6" height="1.4" fill="#9a9a9a"/><rect x="297.5" y="107" width="18.5" height="16.5" fill="#cde3f5" stroke="#5f7a8e" stroke-width="1.4"/><path d="M310 122V114C310 106 324 106 324 114V122" fill="none" stroke="#8a8a8a" stroke-width="3.2"/><path d="M310 122V114C310 106 324 106 324 114V122" fill="none" stroke="#f2f2f2" stroke-width="1.4"/><rect x="306.5" y="121.5" width="21" height="14" rx="2" fill="#f3d21d" stroke="#d6b515" stroke-width="1"/><rect x="347.5" y="111.5" width="11" height="16.5" fill="#cde3f5" stroke="#5f7a8e" stroke-width="1.4"/><circle cx="366" cy="114.5" r="8.5" fill="#cde3f5" stroke="#5f7a8e" stroke-width="1.4"/><path d="M362 114C362 110 370 110 370 114C370 116 367 118 363 118" fill="none" stroke="#8a8a8a" stroke-width="2"/><rect x="356.5" y="122" width="21" height="13.5" rx="2" fill="#f3d21d" stroke="#d6b515" stroke-width="1"/><rect x="399.5" y="117.5" width="18" height="13.5" fill="#cde3f5" stroke="#5f7a8e" stroke-width="1.4"/><circle cx="414.5" cy="115.5" r="9" fill="#cde3f5" stroke="#5f7a8e" stroke-width="1.4"/><rect x="396" y="105" width="3" height="3" fill="#111"/><rect x="423" y="105" width="3" height="3" fill="#111"/><rect x="396" y="132" width="3" height="3" fill="#111"/><rect x="423" y="132" width="3" height="3" fill="#111"/><rect x="449.5" y="117.5" width="18" height="13.5" fill="#e3e7a8" stroke="#8a8f6a" stroke-width="1.4"/><circle cx="464.5" cy="115.5" r="9" fill="#cde3f5" stroke="#5f7a8e" stroke-width="1.4"/><rect x="453" y="105" width="3" height="3" fill="#111"/><rect x="473" y="105" width="3" height="3" fill="#111"/><rect x="446" y="114" width="3" height="3" fill="#111"/><rect x="473" y="124.5" width="3" height="3" fill="#111"/><rect x="446" y="132" width="3" height="3" fill="#111"/><rect x="469" y="132" width="3" height="3" fill="#111"/><rect x="453.5" y="123.5" width="2.5" height="2.5" fill="#111"/><rect x="495.5" y="118.5" width="22" height="15.5" fill="#cde3f5" stroke="#7f98ad" stroke-width="1.2"/><rect x="502.5" y="106" width="23" height="16.5" fill="#eeeba0" stroke="#8a8a70" stroke-width="1.2"/><path d="M524 134H531L527.5 138Z" fill="#444"/><path d="M545.5 103.5V137" stroke="#444" stroke-width="1.4"/><rect x="546.5" y="105.5" width="14" height="12" fill="#c9eec0" stroke="#8aae86" stroke-width="1.2"/><rect x="546.5" y="120.5" width="21" height="14" fill="#cde3f5" stroke="#7f98ad" stroke-width="1.2"/><path d="M573.5 134H580.5L577 138Z" fill="#444"/><rect x="592.5" y="113.5" width="6.5" height="14.5" fill="#c9eec0" stroke="#8aae86" stroke-width="1.1"/><rect x="606" y="113.5" width="9.5" height="21" fill="#cde3f5" stroke="#7f98ad" stroke-width="1.1"/><rect x="619.5" y="113.5" width="7" height="11.5" fill="#c9eec0" stroke="#8aae86" stroke-width="1.1"/><path d="M592.5 105V117M606 105V117M619.5 105V117" stroke="#444" stroke-width="1.4"/><path d="M622 134H629L625.5 138Z" fill="#444"/><rect x="644.5" y="105.5" width="18" height="29" fill="#cde3f5" stroke="#7f98ad" stroke-width="1.2"/><rect x="665.5" y="105.5" width="9" height="29" fill="#eeeba0" stroke="#8a8a70" stroke-width="1.2"/><path d="M645 120H652M649 117L652 120L649 123M662 120H655M658 117L655 120L658 123" fill="none" stroke="#333" stroke-width="1.2"/><path d="M671 134H679L675 138Z" fill="#444"/><path d="M16 159.5H40" stroke="#c0c0c0" stroke-width="1" stroke-dasharray="1.2 2.8"/><path d="M16 163.5H40" stroke="#c0c0c0" stroke-width="1" stroke-dasharray="1.2 2.8"/><path d="M23 203L15.5 190C14 187.5 16.5 185 19 187L23 191V177C23 174 27 174 27 177V186V175.5C27 172.5 31 172.5 31 175.5V186V177.5C31 174.5 35 174.5 35 177.5V187V181C35 178 39 178 39 181V195L36.5 207H24Z" fill="#fff" stroke="#111" stroke-width="1.8" stroke-linejoin="round"/><path d="M27 186V180M31 186V179M35 187V182" stroke="#111" stroke-width="1"/><rect x="10.5" y="224.5" width="13" height="20" fill="none" stroke="#111" stroke-width="1.8" stroke-dasharray="2.5 2"/><path d="M21 246L11 256" stroke="#333" stroke-width="5" stroke-linecap="round"/><path d="M20 247L12 255" stroke="#e3cc7a" stroke-width="2.6"/><circle cx="31.5" cy="235" r="12.3" fill="#e9e9e9" stroke="#6a6a6a" stroke-width="1.8"/><rect x="12.5" y="273.5" width="26" height="23" fill="none" stroke="#777" stroke-width="1.2" stroke-dasharray="1.6 2.2"/><rect x="11.5" y="272.5" width="4" height="4" fill="#fff" stroke="#777" stroke-width="1.2"/><rect x="35.5" y="272.5" width="4" height="4" fill="#fff" stroke="#777" stroke-width="1.2"/><rect x="11.5" y="294" width="4" height="4" fill="#fff" stroke="#777" stroke-width="1.2"/><rect x="35.5" y="294" width="4" height="4" fill="#fff" stroke="#777" stroke-width="1.2"/><path d="M17 273L17 299L23 293L28.5 305L33 303L27.5 291.5H36Z" fill="#fff" stroke="#111" stroke-width="1.8" stroke-linejoin="round"/><rect x="4" y="314" width="46.5" height="44" rx="4" fill="#dcdcdc" stroke="#c2c2c2" stroke-width="1"/><path d="M14.5 322C14.5 319 18 318.5 18 318.5H41.5V349.5H18C14.5 349.5 14.5 346 14.5 346Z" fill="#e6e6e6" stroke="#9a9a9a" stroke-width="1.3"/><path d="M18 319V345C17 348 14.5 347 14.5 346" fill="none" stroke="#9a9a9a" stroke-width="1.1"/><path d="M29 331H24V326L31.5 319.5L39 326V331H34V336H29Z" fill="#5b86c0" stroke="#3f6394" stroke-width="0.8"/><path d="M19.5 339L24.5 334V337H27V342H24.5V345Z" fill="#5b86c0" stroke="#3f6394" stroke-width="0.8"/><rect x="30" y="345" width="4" height="4" fill="#5b86c0"/><rect x="38" y="337" width="3.5" height="5" fill="#5b86c0"/><path d="M22 372L12 393M22 372L40 382" stroke="#111" stroke-width="1.6"/><path d="M12 393L30 390" stroke="#111" stroke-width="1.4" stroke-dasharray="1.6 1.6"/><path d="M26 394L38 383M29 384L41 395" stroke="#b89518" stroke-width="5" stroke-linecap="round"/><path d="M26 394L38 383M29 384L41 395" stroke="#f1d44a" stroke-width="3" stroke-linecap="round"/><ellipse cx="33" cy="385" rx="5.5" ry="2.5" transform="rotate(-30 33 385)" fill="#ccc" stroke="#888" stroke-width="0.8"/><circle cx="22" cy="371.5" r="3.3" fill="#3b7ddd"/><circle cx="40" cy="382" r="3.3" fill="#3b7ddd"/><circle cx="13" cy="395" r="3.3" fill="#3b7ddd"/><path d="M16 416H40V444H16C13 444 12 441 12 441V419C12 416 16 416 16 416Z" fill="#e3e3e3" stroke="#a5a5a5" stroke-width="1.2"/><path d="M16 416V440C15 442 12 441 12 441" fill="none" stroke="#a5a5a5" stroke-width="1"/><rect x="31.5" y="436" width="14" height="14" rx="3" fill="#67996f" stroke="#55855d" stroke-width="0.8"/><path d="M38.5 439.5V446.5M35.0 443.0H42.0" stroke="#fff" stroke-width="2.8"/><path d="M17 469.5L41.5 468L42.5 486.5L31 489L10 485Z" fill="#e2e2e2" stroke="#a9a9a9" stroke-width="1"/><path d="M15 475L41.8 473.5M12.5 480.5L42 479M24 469L20 487M33 468.5L30 488M18 472Q28 476 33 486" stroke="#bdbdbd" stroke-width="0.9" fill="none"/><rect x="31.5" y="484" width="14" height="14" rx="3" fill="#67996f" stroke="#55855d" stroke-width="0.8"/><path d="M38.5 487.5V494.5M35.0 491.0H42.0" stroke="#fff" stroke-width="2.8"/><rect x="12" y="515" width="30" height="22" fill="#5aa9e6"/><path d="M12 528L28 520L42 524V537H12Z" fill="#e8c15a"/><path d="M12 533L42 530V537H12Z" fill="#b8973c"/><rect x="31.5" y="532" width="14" height="14" rx="3" fill="#67996f" stroke="#55855d" stroke-width="0.8"/><path d="M38.5 535.5V542.5M35.0 539.0H42.0" stroke="#fff" stroke-width="2.8"/><rect x="11.5" y="564.5" width="30" height="21" fill="#f3f3f3" stroke="#999" stroke-width="1.2"/><text x="26.5" y="582" text-anchor="middle" font-family="Liberation Serif" font-size="17" fill="#333">T</text><rect x="31.5" y="581" width="14" height="14" rx="3" fill="#67996f" stroke="#55855d" stroke-width="0.8"/><path d="M38.5 584.5V591.5M35.0 588.0H42.0" stroke="#fff" stroke-width="2.8"/><rect x="13.5" y="610.5" width="7" height="7" fill="#f2c51a" stroke="#c9a010" stroke-width="0.8"/><rect x="13.5" y="619.5" width="7" height="7" fill="#d83d1a" stroke="#a83010" stroke-width="0.8"/><rect x="13.5" y="628.5" width="7" height="7" fill="#2a8f6c" stroke="#1f6f50" stroke-width="0.8"/><path d="M22 616H32M22 625H36M22 634H28" stroke="#a0a0a0" stroke-width="2"/><rect x="31.5" y="629.5" width="14" height="14" rx="3" fill="#67996f" stroke="#55855d" stroke-width="0.8"/><path d="M38.5 633.0V640.0M35.0 636.5H42.0" stroke="#fff" stroke-width="2.8"/><rect x="10.5" y="667.5" width="33" height="6" rx="1.5" fill="#555" stroke="#555" stroke-width="1"/><path d="M19 670.5H26M33 670.5H39" stroke="#f7f7f7" stroke-width="2.4"/><rect x="31.5" y="678" width="14" height="14" rx="3" fill="#67996f" stroke="#55855d" stroke-width="0.8"/><path d="M38.5 681.5V688.5M35.0 685.0H42.0" stroke="#fff" stroke-width="2.8"/><path d="M26 705L15 735L26 728.5L37 735Z" fill="#4f6f9f" stroke="#2f4f7f" stroke-width="1"/><text x="26" y="725" text-anchor="middle" font-family="Liberation Sans" font-size="9" fill="#fff">N</text><rect x="31.5" y="723.5" width="14" height="14" rx="3" fill="#67996f" stroke="#55855d" stroke-width="0.8"/><path d="M38.5 727.0V734.0M35.0 730.5H42.0" stroke="#fff" stroke-width="2.8"/><rect x="12" y="760" width="20" height="16" fill="#cde3f5" stroke="#7f98ad" stroke-width="1.1"/><circle cx="33" cy="766" r="9" fill="#f4b3b3" stroke="#c88" stroke-width="1"/><path d="M24 751L14 770H34Z" fill="#b9e6a8" stroke="#7cb06c" stroke-width="1.1"/><rect x="31.5" y="773" width="14" height="14" rx="3" fill="#67996f" stroke="#55855d" stroke-width="0.8"/><path d="M38.5 776.5V783.5M35.0 780.0H42.0" stroke="#fff" stroke-width="2.8"/><path d="M41 786H47L44 789.5Z" fill="#333"/><path d="M26 801L30 811.5H41L32 818L35.5 829L26 822L16.5 829L20 818L11 811.5H22Z" fill="#f7d57a" stroke="#d9a440" stroke-width="1.2" stroke-linejoin="round"/><rect x="31.5" y="820.5" width="14" height="14" rx="3" fill="#67996f" stroke="#55855d" stroke-width="0.8"/><path d="M38.5 824.0V831.0M35.0 827.5H42.0" stroke="#fff" stroke-width="2.8"/><path d="M13 880L40 853" stroke="#333" stroke-width="1.8"/><path d="M40 851L32 853.5L38 859.5Z" fill="#fff" stroke="#333" stroke-width="1.4"/><rect x="11" y="877" width="4" height="4" fill="#333"/><rect x="31.5" y="868.5" width="14" height="14" rx="3" fill="#67996f" stroke="#55855d" stroke-width="0.8"/><path d="M38.5 872.0V879.0M35.0 875.5H42.0" stroke="#fff" stroke-width="2.8"/><path d="M12 924L20 897L39 905" stroke="#111" stroke-width="1.6" fill="none"/><path d="M12 924L38 906" stroke="#111" stroke-width="1.3" stroke-dasharray="1.5 1.5"/><circle cx="20" cy="897" r="3.5" fill="#3b7ddd"/><circle cx="39" cy="905" r="3.5" fill="#3b7ddd"/><circle cx="13" cy="923" r="3.5" fill="#3b7ddd"/><rect x="31.5" y="916.5" width="14" height="14" rx="3" fill="#67996f" stroke="#55855d" stroke-width="0.8"/><path d="M38.5 920.0V927.0M35.0 923.5H42.0" stroke="#fff" stroke-width="2.8"/><path d="M41 929H47L44 932.5Z" fill="#333"/><path d="M22.5 988.5L27 992.5L31.5 988.5M22.5 993.5L27 997.5L31.5 993.5" fill="none" stroke="#333" stroke-width="1.3"/></svg>
</body></html>
